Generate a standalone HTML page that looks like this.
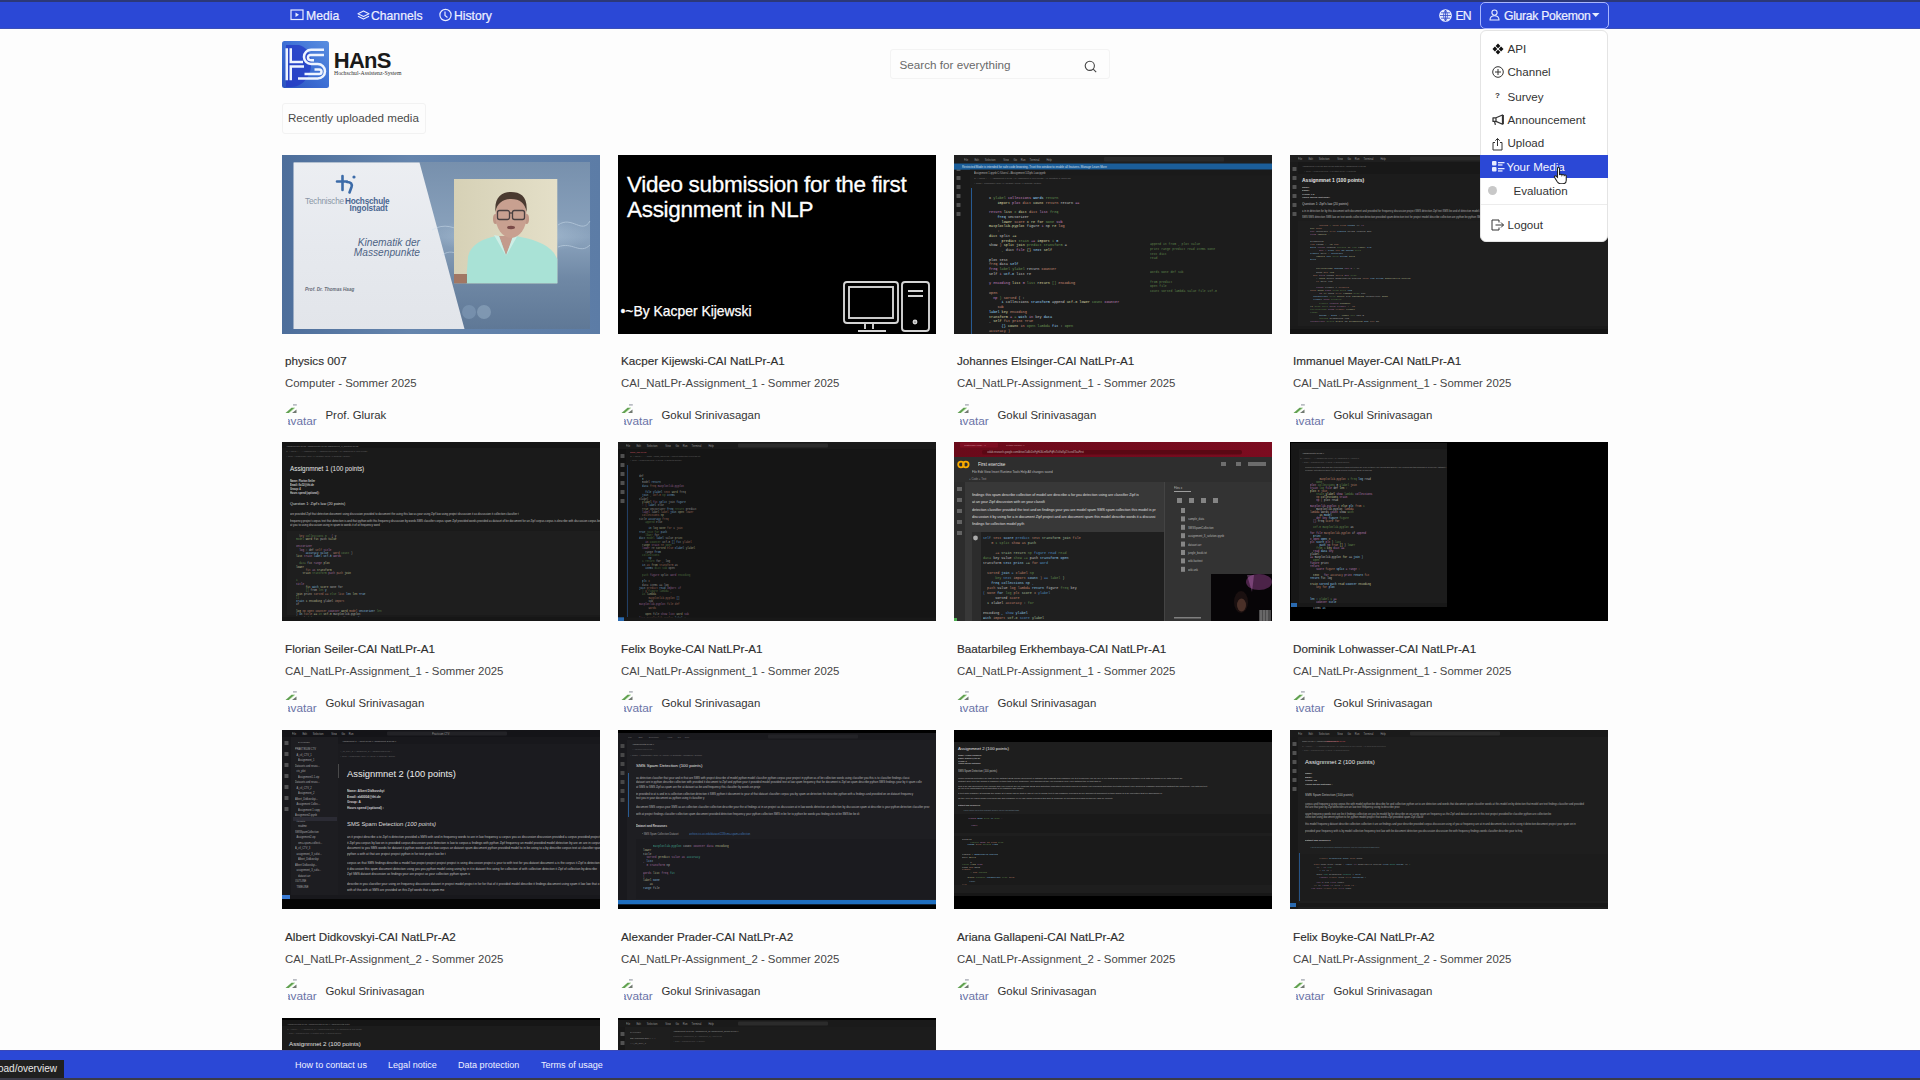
<!DOCTYPE html><html><head><meta charset="utf-8"><style>
*{margin:0;padding:0;box-sizing:border-box}
html,body{width:1920px;height:1080px;overflow:hidden;background:#fdfdfd;font-family:'Liberation Sans', sans-serif}
.abs{position:absolute}
.th{position:absolute;width:318px;height:179.3px;overflow:hidden}
.t1{position:absolute;font-size:11.7px;color:#2e2e2e;-webkit-text-stroke:.15px #2e2e2e;line-height:1;white-space:nowrap}
.t2{position:absolute;font-size:11.4px;color:#454545;line-height:1;white-space:nowrap}
.t3{position:absolute;font-size:11.4px;color:#333;line-height:1;white-space:nowrap}
.av{position:absolute;font-size:11.8px;color:#6a72a6;line-height:1;white-space:nowrap}
.nav{position:absolute;color:#eef0ff;-webkit-text-stroke:.2px #eef0ff;font-size:12.2px;line-height:1;white-space:nowrap}
.dd{position:absolute;font-size:11.6px;color:#333;line-height:1;white-space:nowrap}
.ft{position:absolute;font-size:9.05px;color:#f0f2ff;line-height:1;white-space:nowrap}
</style></head><body>
<div class="abs" style="left:0;top:0;width:1920px;height:29px;background:#2b48d6"></div>
<div class="abs" style="left:0;top:0;width:1920px;height:2px;background:#2c3878"></div>
<div class="abs" style="left:0;top:28px;width:1920px;height:1px;background:#3a4fb8"></div>
<svg class="abs" style="left:290px;top:9px" width="14" height="12" fill="none" stroke="#e8ecff" stroke-width="1.2"><rect x="1" y="1" width="12" height="9.5"/><path d="M5.5 3.5l3.5 2.2-3.5 2.2z" fill="#e8ecff" stroke="none"/></svg>
<div class="nav" style="left:306px;top:10.4px">Media</div>
<svg class="abs" style="left:357px;top:9.5px" width="13" height="11" fill="none" stroke="#e8ecff" stroke-width="1.15" stroke-linejoin="round"><path d="M6.5 1L12 3.8 6.5 6.6 1 3.8z"/><path d="M1 6.3L6.5 9.1 12 6.3"/></svg>
<div class="nav" style="left:371px;top:10.4px">Channels</div>
<svg class="abs" style="left:439px;top:8px" width="13" height="14" fill="none" stroke="#e8ecff" stroke-width="1.2"><circle cx="6.5" cy="7" r="5.6"/><path d="M6 3.5v4l2.5 2"/></svg>
<div class="nav" style="left:454px;top:10.4px">History</div>
<svg class="abs" style="left:1439px;top:8.5px" width="13" height="13" fill="none" stroke="#e8ecff" stroke-width="1.1"><circle cx="6.5" cy="6.5" r="5.8" fill="#e8ecff"/><path d="M1 6.5h11M6.5 1v11M2 3.8h9M2 9.2h9M6.5 1c-2.5 3-2.5 8 0 11M6.5 1c2.5 3 2.5 8 0 11" stroke="#3048c8" stroke-width=".8"/></svg>
<div class="nav" style="left:1455.5px;top:10.4px;letter-spacing:-1px">EN</div>
<div class="abs" style="left:1479.5px;top:1.5px;width:129px;height:27.5px;border:1.3px solid #a9b6ff;border-radius:5px"></div>
<svg class="abs" style="left:1489px;top:9px" width="11" height="12" fill="none" stroke="#e8ecff" stroke-width="1.1"><circle cx="5.5" cy="3.6" r="2.6"/><path d="M1 11c0-3 2-4.3 4.5-4.3S10 8 10 11z"/></svg>
<div class="nav" style="left:1504px;top:10.4px;letter-spacing:-0.3px">Glurak Pokemon</div>
<svg class="abs" style="left:1592px;top:13px" width="8" height="5"><path d="M0 0h7.5L3.75 4z" fill="#e8ecff"/></svg>
<svg class="abs" style="left:282px;top:41px" width="47" height="47">
<defs><linearGradient id="lg" x1="0" y1="1" x2="1" y2="0"><stop offset="0" stop-color="#2a52c0"/><stop offset=".55" stop-color="#3f72d6"/><stop offset="1" stop-color="#5b8fe0"/></linearGradient></defs>
<rect x="0" y="0" width="47" height="47" rx="2.5" fill="url(#lg)"/>
<path d="M4 4 H17 C29 7 33 24 25 37 C21 43 15 46 9 46 H4z" fill="#2236c4" opacity=".7"/>
<g fill="none" stroke="#eef4ff" stroke-width="2.5">
<path d="M4.75 7.25V39.25"/>
<path d="M8.75 7.25V21H21"/>
<path d="M22 25.5H8.75V39.25"/>
<path d="M42 8.75H29.1A7.125 7.125 0 0 0 29.1 23H35.75A7.25 7.25 0 0 1 35.75 37.5H16"/>
<path d="M42 14H28.6A2.6 2.6 0 0 0 28.6 19.2H32"/>
<path d="M22.5 33H37.25A2.25 2.25 0 0 0 37.25 28.5H32.5"/>
</g></svg>
<div class="abs" style="left:333.8px;top:50px;font:bold 22px 'Liberation Sans', sans-serif;color:#1a1a1a;line-height:1;letter-spacing:-0.75px">HAnS</div>
<div class="abs" style="left:334px;top:71px;font:5.75px 'Liberation Serif', serif;color:#333;line-height:1;white-space:nowrap">Hochschul-Assistenz-System</div>
<div class="abs" style="left:890px;top:49px;width:220px;height:29.5px;border:1px solid #f3f3f3;border-radius:3px;background:#fdfdfd"></div>
<div class="abs" style="left:899.5px;top:59px;font-size:11.7px;color:#6a6a6a;line-height:1;white-space:nowrap">Search for everything</div>
<svg class="abs" style="left:1083.5px;top:60px" width="14" height="13" fill="none" stroke="#444" stroke-width="1.1"><circle cx="5.8" cy="5.8" r="4.6"/><path d="M9.2 9.2l3 3"/></svg>
<div class="abs" style="left:282px;top:102.8px;width:144px;height:31.5px;border:1px solid #f2f2f2;border-radius:3px;background:#fdfdfd"></div>
<div class="abs" style="left:288px;top:112.3px;font-size:11.6px;color:#4a4a4a;line-height:1;white-space:nowrap">Recently uploaded media</div>
<div style="position:absolute;left:282px;top:154.5px"><div class="th" style="background:linear-gradient(90deg,#4d6e9b,#6585ad 40%,#5c7ca6)"><div style="position:absolute;left:11.5px;top:7.5px;width:296px;height:166.5px;background:linear-gradient(180deg,#7790ad,#8ba3bd 45%,#6f88a5 70%,#5f7896)"></div><div style="position:absolute;left:150px;top:60px;width:160px;height:40px;background:radial-gradient(ellipse at center,rgba(200,220,235,.55),rgba(200,220,235,0) 70%)"></div><svg width="318" height="179" style="position:absolute;left:0;top:0"><defs><linearGradient id="sg" x1="0" y1="0" x2="0" y2="1"><stop offset="0" stop-color="#eceef2"/><stop offset=".5" stop-color="#e6e9ee"/><stop offset="1" stop-color="#e2e5ea"/></linearGradient></defs><polygon points="11.5,7.5 137.5,7.5 182.5,174 11.5,174" fill="url(#sg)"/></svg><svg width="318" height="179" style="position:absolute;left:0;top:0" fill="none" stroke="#d0e0ee" stroke-width="1" opacity=".5"><path d="M150 75 C175 60 190 95 215 80"/><path d="M276 70 C290 60 300 80 308 66"/><path d="M276 92 C290 86 298 100 308 90"/><path d="M160 100 C175 90 180 110 200 100"/></svg><svg width="103.3" height="104.3" style="position:absolute;left:172.3px;top:24.8px"><defs><linearGradient id="vb" x1="0" x2="1"><stop offset="0" stop-color="#d6d1b6"/><stop offset="1" stop-color="#e4dfc8"/></linearGradient></defs><rect width="103.3" height="104.3" fill="url(#vb)"/><path d="M12 104.3 L14 78 C16 66 28 60 42 57 L62 57 C78 60 92 64 100 74 L103.3 80 V104.3z" fill="#a9e2d6"/><path d="M45 57 L52 76 L60 57z" fill="#c39a8c"/><path d="M40 56 L52 77 L45 57z M64 56 L52 77 L59 57z" fill="#cdeee6"/><ellipse cx="41.5" cy="40" rx="2.5" ry="5" fill="#bf9686"/><ellipse cx="72.5" cy="40" rx="2.5" ry="5" fill="#bf9686"/><ellipse cx="57" cy="37" rx="15.5" ry="22" fill="#c8a090"/><path d="M41.5 33 C40 18 48 13 57 13 C67 13 74 18 72.5 33 C71 24 66 20 57 20 C49 20 43 24 41.5 33z" fill="#4a3a30"/><g fill="none" stroke="#4a4040" stroke-width="1.3"><rect x="43.5" y="31.5" width="12" height="9" rx="2"/><rect x="58.5" y="31.5" width="12" height="9" rx="2"/><path d="M55.5 34h3"/></g><ellipse cx="57" cy="48.5" rx="4" ry="1.7" fill="#7a4a48"/><rect x="0" y="95" width="13" height="9.3" fill="#8a5040" opacity=".7"/></svg><div style="position:absolute;left:180px;top:150px;width:14px;height:14px;border-radius:50%;background:#7d97b3;opacity:.7"></div><div style="position:absolute;left:195px;top:150px;width:14px;height:14px;border-radius:50%;background:#8aa2bb;opacity:.7"></div><svg width="24" height="22" style="position:absolute;left:52px;top:18px" fill="none" stroke="#3c6ba8" stroke-width="2.6" stroke-linecap="round"><path d="M3 8.5h10M8.5 3v14M13 9c4 0 5.5 2 4.5 5l-2 5.5"/><circle cx="20" cy="4" r="1.6" fill="#3c6ba8" stroke="none"/></svg><div style="position:absolute;left:23px;top:43px;font:8.2px 'Liberation Sans', sans-serif;color:#8a96a6;line-height:7.6px;white-space:nowrap;letter-spacing:-0.2px">Technische<b style="color:#4a6690;margin-left:1px">Hochschule</b></div><div style="position:absolute;left:67.5px;top:50.8px;font:bold 8.2px 'Liberation Sans', sans-serif;color:#4a6690;line-height:7.6px;white-space:nowrap;letter-spacing:-0.1px">Ingolstadt</div><div style="position:absolute;left:40px;top:83px;font:italic 10.2px 'Liberation Sans', sans-serif;color:#4e6484;line-height:10px;text-align:right;width:98px;white-space:nowrap">Kinematik der<br>Massenpunkte</div><div style="position:absolute;left:23px;top:132px;font:italic bold 4.6px 'Liberation Sans', sans-serif;color:#666c78;white-space:nowrap">Prof. Dr. Thomas Haag</div></div></div>
<div class="t1" style="left:285px;top:355.0px">physics 007</div>
<div class="t2" style="left:285px;top:378.0px">Computer - Sommer 2025</div>
<svg class="abs" style="left:284.5px;top:403.5px" width="13" height="10"><path d="M.5 9 L6.5 3.8 L10 3.8 L4 9z" fill="#62a052"/><path d="M4 9 L10 3.8" stroke="#c8f5b8" stroke-width=".7"/><path d="M7 9 L11.5 5.5 L11.5 9z" fill="#6f786f"/><rect x="8" y="0.3" width="3.8" height="1.2" fill="#9ca0aa"/></svg>
<div class="abs" style="left:288px;top:413.5px;width:31px;height:16px;overflow:hidden"><div class="av" style="left:-4.06px;top:2.1px">avatar</div></div>
<div class="t3" style="left:325.5px;top:410.0px">Prof. Glurak</div>
<div style="position:absolute;left:618px;top:154.5px"><div class="th" style="background:#000"><div style="position:absolute;left:9px;top:17px;font:22.5px 'Liberation Sans', sans-serif;color:#fff;line-height:25.3px;letter-spacing:-0.3px;-webkit-text-stroke:.3px #fff">Video submission for the first<br>Assignment in NLP</div><div style="position:absolute;left:2.5px;top:148.5px;font:13.9px 'Liberation Sans', sans-serif;color:#fff;white-space:nowrap;-webkit-text-stroke:.25px #fff">&bull;~By Kacper Kijewski</div><svg width="318" height="179" style="position:absolute;left:0;top:0" fill="none" stroke="#d4d4d4" stroke-width="1.9"><rect x="226" y="127" width="54" height="41" rx="3"/><rect x="231" y="132" width="44" height="31"/><path d="M247 168v6M255 168v6M240 176h28"/><rect x="284" y="127" width="27" height="49" rx="3"/><path d="M290 136h15M290 141h15"/><circle cx="297" cy="167" r="1.5"/></svg></div></div>
<div class="t1" style="left:621px;top:355.0px">Kacper Kijewski-CAI NatLPr-A1</div>
<div class="t2" style="left:621px;top:378.0px">CAI_NatLPr-Assignment_1 - Sommer 2025</div>
<svg class="abs" style="left:620.5px;top:403.5px" width="13" height="10"><path d="M.5 9 L6.5 3.8 L10 3.8 L4 9z" fill="#62a052"/><path d="M4 9 L10 3.8" stroke="#c8f5b8" stroke-width=".7"/><path d="M7 9 L11.5 5.5 L11.5 9z" fill="#6f786f"/><rect x="8" y="0.3" width="3.8" height="1.2" fill="#9ca0aa"/></svg>
<div class="abs" style="left:624px;top:413.5px;width:31px;height:16px;overflow:hidden"><div class="av" style="left:-4.06px;top:2.1px">avatar</div></div>
<div class="t3" style="left:661.5px;top:410.0px">Gokul Srinivasagan</div>
<div style="position:absolute;left:954px;top:154.5px"><svg class="th" width="318" height="179.3" style="background:#1c1c1c"><rect x="0" y="0" width="318" height="7" fill="#1f1f1f"/><text x="8" y="5" font-size="2.6" fill="#b0b0b0" opacity="0.8" font-family="'Liberation Sans', sans-serif">File</text><text x="18.4" y="5" font-size="2.6" fill="#b0b0b0" opacity="0.8" font-family="'Liberation Sans', sans-serif">Edit</text><text x="28.799999999999997" y="5" font-size="2.6" fill="#b0b0b0" opacity="0.8" font-family="'Liberation Sans', sans-serif">Selection</text><text x="47.199999999999996" y="5" font-size="2.6" fill="#b0b0b0" opacity="0.8" font-family="'Liberation Sans', sans-serif">View</text><text x="57.599999999999994" y="5" font-size="2.6" fill="#b0b0b0" opacity="0.8" font-family="'Liberation Sans', sans-serif">Go</text><text x="64.8" y="5" font-size="2.6" fill="#b0b0b0" opacity="0.8" font-family="'Liberation Sans', sans-serif">Run</text><text x="73.6" y="5" font-size="2.6" fill="#b0b0b0" opacity="0.8" font-family="'Liberation Sans', sans-serif">Terminal</text><text x="90.39999999999999" y="5" font-size="2.6" fill="#b0b0b0" opacity="0.8" font-family="'Liberation Sans', sans-serif">Help</text><rect x="120" y="1.5" width="90" height="4" fill="#2b2b2b" rx="1"/><rect x="0" y="7" width="16" height="172.3" fill="#191919"/><rect x="2.5" y="12" width="4" height="4" fill="#6a6a6a" opacity="0.7" rx="0.6"/><rect x="2.5" y="21" width="4" height="4" fill="#6a6a6a" opacity="0.7" rx="0.6"/><rect x="2.5" y="30" width="4" height="4" fill="#6a6a6a" opacity="0.7" rx="0.6"/><rect x="2.5" y="39" width="4" height="4" fill="#6a6a6a" opacity="0.7" rx="0.6"/><rect x="2.5" y="48" width="4" height="4" fill="#6a6a6a" opacity="0.7" rx="0.6"/><rect x="2.5" y="57" width="4" height="4" fill="#6a6a6a" opacity="0.7" rx="0.6"/><rect x="0" y="0" width="318" height="8.5" fill="#1f1f1f"/><text x="10" y="5.5" font-size="2.6" fill="#b0b0b0" opacity="0.8" font-family="'Liberation Sans', sans-serif">File</text><text x="20.4" y="5.5" font-size="2.6" fill="#b0b0b0" opacity="0.8" font-family="'Liberation Sans', sans-serif">Edit</text><text x="30.799999999999997" y="5.5" font-size="2.6" fill="#b0b0b0" opacity="0.8" font-family="'Liberation Sans', sans-serif">Selection</text><text x="49.199999999999996" y="5.5" font-size="2.6" fill="#b0b0b0" opacity="0.8" font-family="'Liberation Sans', sans-serif">View</text><text x="59.599999999999994" y="5.5" font-size="2.6" fill="#b0b0b0" opacity="0.8" font-family="'Liberation Sans', sans-serif">Go</text><text x="66.8" y="5.5" font-size="2.6" fill="#b0b0b0" opacity="0.8" font-family="'Liberation Sans', sans-serif">Run</text><text x="75.6" y="5.5" font-size="2.6" fill="#b0b0b0" opacity="0.8" font-family="'Liberation Sans', sans-serif">Terminal</text><text x="92.39999999999999" y="5.5" font-size="2.6" fill="#b0b0b0" opacity="0.8" font-family="'Liberation Sans', sans-serif">Help</text><rect x="150" y="2" width="120" height="4.5" fill="#2a2a2a" rx="1"/><rect x="0" y="8.5" width="318" height="6.2" fill="#1b5e9a"/><text x="8" y="13" font-size="2.9" fill="#e8eef5" opacity="0.85" font-family="'Liberation Sans', sans-serif">Restricted Mode is intended for safe code browsing. Trust this window to enable all features.   Manage   Learn More</text><rect x="16" y="14.7" width="302" height="5.5" fill="#1a1a1a"/><text x="20" y="18.8" font-size="2.6" fill="#ddd" opacity="0.75" font-family="'Liberation Sans', sans-serif">Assignment 1.ipynb  C:/Users/.../Assignment 1/Zipfs Law.ipynb</text><text x="20" y="24" font-size="2.3" fill="#aaa" opacity="0.6" font-family="'Liberation Sans', sans-serif">C: > Users > ... > Assignment 1.ipynb > M Assignment 1 (100 points) > M Question 1: Zipf's law</text><text x="20" y="28.8" font-size="2.3" fill="#aaa" opacity="0.6" font-family="'Liberation Sans', sans-serif">+ Code  + Markdown  | Run All  | Restart  | Clear All Outputs  | Outline</text><rect x="17" y="33" width="1" height="146" fill="#2a6ab0" opacity="0.8"/><text x="35.0" y="43.8" font-size="3.5" font-family="'Liberation Mono', monospace" opacity="1"><tspan fill="#c8c8c8">x </tspan><tspan fill="#6a9955">ylabel </tspan><tspan fill="#c586c0">collections </tspan><tspan fill="#9cdcfe">words </tspan><tspan fill="#6a9955">return </tspan></text><text x="43.4" y="48.5" font-size="3.5" font-family="'Liberation Mono', monospace" opacity="1"><tspan fill="#dcdcaa">import </tspan><tspan fill="#c586c0">plot </tspan><tspan fill="#ce9178">dict </tspan><tspan fill="#dcdcaa">count </tspan><tspan fill="#ce9178">return </tspan><tspan fill="#c8c8c8">return </tspan><tspan fill="#c586c0">== </tspan></text><text x="35.0" y="58.0" font-size="3.5" font-family="'Liberation Mono', monospace" opacity="1"><tspan fill="#c586c0">return </tspan><tspan fill="#dcdcaa">list </tspan><tspan fill="#6a9955">x </tspan><tspan fill="#dcdcaa">dict </tspan><tspan fill="#ce9178">dict </tspan><tspan fill="#c586c0">list </tspan><tspan fill="#6a9955">freq </tspan></text><text x="43.4" y="62.8" font-size="3.5" font-family="'Liberation Mono', monospace" opacity="1"><tspan fill="#9cdcfe">freq </tspan><tspan fill="#c8c8c8">vectorizer </tspan></text><text x="47.6" y="67.5" font-size="3.5" font-family="'Liberation Mono', monospace" opacity="1"><tspan fill="#dcdcaa">lower </tspan><tspan fill="#ce9178">score </tspan><tspan fill="#dcdcaa">x </tspan><tspan fill="#dcdcaa">re </tspan><tspan fill="#dcdcaa">for </tspan><tspan fill="#6a9955">None </tspan><tspan fill="#c586c0">sub </tspan></text><text x="35.0" y="72.2" font-size="3.5" font-family="'Liberation Mono', monospace" opacity="1"><tspan fill="#dcdcaa">matplotlib.pyplot </tspan><tspan fill="#c8c8c8">figure </tspan><tspan fill="#c586c0">i </tspan><tspan fill="#c8c8c8">np </tspan><tspan fill="#dcdcaa">re </tspan><tspan fill="#ce9178">log </tspan></text><text x="43.4" y="77.0" font-size="3.5" font-family="'Liberation Mono', monospace" opacity="1"><tspan fill="#ce9178">: </tspan></text><text x="35.0" y="81.8" font-size="3.5" font-family="'Liberation Mono', monospace" opacity="1"><tspan fill="#dcdcaa">dict </tspan><tspan fill="#c8c8c8">split </tspan><tspan fill="#dcdcaa">+= </tspan></text><text x="47.6" y="86.5" font-size="3.5" font-family="'Liberation Mono', monospace" opacity="1"><tspan fill="#dcdcaa">predict </tspan><tspan fill="#6a9955">train </tspan><tspan fill="#c586c0">+= </tspan><tspan fill="#dcdcaa">import </tspan><tspan fill="#6a9955">i </tspan><tspan fill="#9cdcfe">0 </tspan></text><text x="35.0" y="91.2" font-size="3.5" font-family="'Liberation Mono', monospace" opacity="1"><tspan fill="#c8c8c8">show </tspan><tspan fill="#ce9178">) </tspan><tspan fill="#dcdcaa">split </tspan><tspan fill="#dcdcaa">join </tspan><tspan fill="#6a9955">predict </tspan><tspan fill="#6a9955">transform </tspan><tspan fill="#c8c8c8">= </tspan></text><text x="47.6" y="96.0" font-size="3.5" font-family="'Liberation Mono', monospace" opacity="1"><tspan fill="#6a9955">, </tspan><tspan fill="#c8c8c8">dict </tspan><tspan fill="#c586c0">file </tspan><tspan fill="#dcdcaa">{} </tspan><tspan fill="#9cdcfe">text </tspan><tspan fill="#dcdcaa">self </tspan></text><text x="35.0" y="105.5" font-size="3.5" font-family="'Liberation Mono', monospace" opacity="1"><tspan fill="#c8c8c8">plot </tspan><tspan fill="#c8c8c8">test </tspan></text><text x="35.0" y="110.2" font-size="3.5" font-family="'Liberation Mono', monospace" opacity="1"><tspan fill="#ce9178">freq </tspan><tspan fill="#c8c8c8">data </tspan><tspan fill="#9cdcfe">self </tspan></text><text x="35.0" y="115.0" font-size="3.5" font-family="'Liberation Mono', monospace" opacity="1"><tspan fill="#c586c0">freq </tspan><tspan fill="#6a9955">label </tspan><tspan fill="#6a9955">ylabel </tspan><tspan fill="#c8c8c8">return </tspan><tspan fill="#ce9178">Counter </tspan></text><text x="35.0" y="119.8" font-size="3.5" font-family="'Liberation Mono', monospace" opacity="1"><tspan fill="#c8c8c8">self </tspan><tspan fill="#c586c0">i </tspan><tspan fill="#9cdcfe">utf-8 </tspan><tspan fill="#c8c8c8">list </tspan><tspan fill="#c8c8c8">re </tspan></text><text x="35.0" y="129.2" font-size="3.5" font-family="'Liberation Mono', monospace" opacity="1"><tspan fill="#c586c0">y </tspan><tspan fill="#c586c0">encoding </tspan><tspan fill="#dcdcaa">list </tspan><tspan fill="#c586c0">0 </tspan><tspan fill="#6a9955">list </tspan><tspan fill="#dcdcaa">return </tspan><tspan fill="#6a9955">[] </tspan><tspan fill="#ce9178">encoding </tspan></text><text x="35.0" y="138.8" font-size="3.5" font-family="'Liberation Mono', monospace" opacity="1"><tspan fill="#ce9178">open </tspan></text><text x="39.2" y="143.5" font-size="3.5" font-family="'Liberation Mono', monospace" opacity="1"><tspan fill="#c586c0">np </tspan><tspan fill="#6a9955">) </tspan><tspan fill="#ce9178">sorted </tspan><tspan fill="#c8c8c8">( </tspan><tspan fill="#c8c8c8">: </tspan></text><text x="47.6" y="148.2" font-size="3.5" font-family="'Liberation Mono', monospace" opacity="1"><tspan fill="#9cdcfe">i </tspan><tspan fill="#c8c8c8">collections </tspan><tspan fill="#9cdcfe">transform </tspan><tspan fill="#c8c8c8">append </tspan><tspan fill="#dcdcaa">utf-8 </tspan><tspan fill="#dcdcaa">lower </tspan><tspan fill="#6a9955">count </tspan><tspan fill="#c586c0">Counter </tspan></text><text x="43.4" y="153.0" font-size="3.5" font-family="'Liberation Mono', monospace" opacity="1"><tspan fill="#ce9178">sub </tspan></text><text x="35.0" y="157.8" font-size="3.5" font-family="'Liberation Mono', monospace" opacity="1"><tspan fill="#9cdcfe">label </tspan><tspan fill="#dcdcaa">key </tspan><tspan fill="#ce9178">encoding </tspan></text><text x="35.0" y="162.5" font-size="3.5" font-family="'Liberation Mono', monospace" opacity="1"><tspan fill="#dcdcaa">transform </tspan><tspan fill="#c586c0">= </tspan><tspan fill="#6a9955">= </tspan><tspan fill="#9cdcfe">with </tspan><tspan fill="#c586c0">in </tspan><tspan fill="#c8c8c8">key </tspan><tspan fill="#9cdcfe">data </tspan></text><text x="35.0" y="167.2" font-size="3.5" font-family="'Liberation Mono', monospace" opacity="1"><tspan fill="#ce9178">, </tspan><tspan fill="#dcdcaa">self </tspan><tspan fill="#ce9178">fit </tspan><tspan fill="#ce9178">print </tspan><tspan fill="#ce9178">True </tspan></text><text x="47.6" y="172.0" font-size="3.5" font-family="'Liberation Mono', monospace" opacity="1"><tspan fill="#9cdcfe">{} </tspan><tspan fill="#dcdcaa">count </tspan><tspan fill="#ce9178">in </tspan><tspan fill="#6a9955">open </tspan><tspan fill="#6a9955">lambda </tspan><tspan fill="#9cdcfe">fit </tspan><tspan fill="#c8c8c8">: </tspan><tspan fill="#6a9955">open </tspan></text><text x="35.0" y="176.8" font-size="3.5" font-family="'Liberation Mono', monospace" opacity="1"><tspan fill="#ce9178">accuracy </tspan><tspan fill="#ce9178">) </tspan></text><text x="35.0" y="181.5" font-size="3.5" font-family="'Liberation Mono', monospace" opacity="1"><tspan fill="#ce9178">count </tspan><tspan fill="#c8c8c8">freq </tspan><tspan fill="#c8c8c8">from </tspan><tspan fill="#c8c8c8">join </tspan><tspan fill="#c8c8c8">in </tspan><tspan fill="#9cdcfe">True </tspan><tspan fill="#dcdcaa">path </tspan><tspan fill="#9cdcfe">print </tspan></text><text x="35.0" y="186.2" font-size="3.5" font-family="'Liberation Mono', monospace" opacity="1"><tspan fill="#c586c0">count </tspan><tspan fill="#6a9955">collections </tspan><tspan fill="#dcdcaa">freq </tspan></text><text x="196.0" y="90.0" font-size="3.1" font-family="'Liberation Mono', monospace" opacity="0.85"><tspan fill="#6a9955">append </tspan><tspan fill="#6a9955">in </tspan><tspan fill="#6a9955">from </tspan><tspan fill="#6a9955">, </tspan><tspan fill="#6a9955">plot </tspan><tspan fill="#6a9955">value </tspan></text><text x="196.0" y="94.8" font-size="3.1" font-family="'Liberation Mono', monospace" opacity="0.85"><tspan fill="#6a9955">print </tspan><tspan fill="#6a9955">range </tspan><tspan fill="#6a9955">predict </tspan><tspan fill="#6a9955">read </tspan><tspan fill="#6a9955">items </tspan><tspan fill="#6a9955">None </tspan></text><text x="196.0" y="99.6" font-size="3.1" font-family="'Liberation Mono', monospace" opacity="0.85"><tspan fill="#6a9955">text </tspan><tspan fill="#6a9955">dict </tspan></text><text x="196.0" y="104.4" font-size="3.1" font-family="'Liberation Mono', monospace" opacity="0.85"><tspan fill="#6a9955">read </tspan></text><text x="196.0" y="118.0" font-size="3.1" font-family="'Liberation Mono', monospace" opacity="0.85"><tspan fill="#6a9955">words </tspan><tspan fill="#6a9955">None </tspan><tspan fill="#6a9955">def </tspan><tspan fill="#6a9955">sub </tspan></text><text x="196.0" y="127.6" font-size="3.1" font-family="'Liberation Mono', monospace" opacity="0.85"><tspan fill="#6a9955">from </tspan><tspan fill="#6a9955">predict </tspan></text><text x="196.0" y="132.4" font-size="3.1" font-family="'Liberation Mono', monospace" opacity="0.85"><tspan fill="#6a9955">open </tspan><tspan fill="#6a9955">file </tspan></text><text x="196.0" y="137.2" font-size="3.1" font-family="'Liberation Mono', monospace" opacity="0.85"><tspan fill="#6a9955">count </tspan><tspan fill="#6a9955">sorted </tspan><tspan fill="#6a9955">lambda </tspan><tspan fill="#6a9955">value </tspan><tspan fill="#6a9955">file </tspan><tspan fill="#6a9955">utf-8 </tspan></text></svg></div>
<div class="t1" style="left:957px;top:355.0px">Johannes Elsinger-CAI NatLPr-A1</div>
<div class="t2" style="left:957px;top:378.0px">CAI_NatLPr-Assignment_1 - Sommer 2025</div>
<svg class="abs" style="left:956.5px;top:403.5px" width="13" height="10"><path d="M.5 9 L6.5 3.8 L10 3.8 L4 9z" fill="#62a052"/><path d="M4 9 L10 3.8" stroke="#c8f5b8" stroke-width=".7"/><path d="M7 9 L11.5 5.5 L11.5 9z" fill="#6f786f"/><rect x="8" y="0.3" width="3.8" height="1.2" fill="#9ca0aa"/></svg>
<div class="abs" style="left:960px;top:413.5px;width:31px;height:16px;overflow:hidden"><div class="av" style="left:-4.06px;top:2.1px">avatar</div></div>
<div class="t3" style="left:997.5px;top:410.0px">Gokul Srinivasagan</div>
<div style="position:absolute;left:1290px;top:154.5px"><svg class="th" width="318" height="179.3" style="background:#1c1c1c"><rect x="0" y="0" width="318" height="7" fill="#1f1f1f"/><text x="8" y="5" font-size="2.6" fill="#b0b0b0" opacity="0.8" font-family="'Liberation Sans', sans-serif">File</text><text x="18.4" y="5" font-size="2.6" fill="#b0b0b0" opacity="0.8" font-family="'Liberation Sans', sans-serif">Edit</text><text x="28.799999999999997" y="5" font-size="2.6" fill="#b0b0b0" opacity="0.8" font-family="'Liberation Sans', sans-serif">Selection</text><text x="47.199999999999996" y="5" font-size="2.6" fill="#b0b0b0" opacity="0.8" font-family="'Liberation Sans', sans-serif">View</text><text x="57.599999999999994" y="5" font-size="2.6" fill="#b0b0b0" opacity="0.8" font-family="'Liberation Sans', sans-serif">Go</text><text x="64.8" y="5" font-size="2.6" fill="#b0b0b0" opacity="0.8" font-family="'Liberation Sans', sans-serif">Run</text><text x="73.6" y="5" font-size="2.6" fill="#b0b0b0" opacity="0.8" font-family="'Liberation Sans', sans-serif">Terminal</text><text x="90.39999999999999" y="5" font-size="2.6" fill="#b0b0b0" opacity="0.8" font-family="'Liberation Sans', sans-serif">Help</text><rect x="120" y="1.5" width="90" height="4" fill="#2b2b2b" rx="1"/><rect x="0" y="7" width="8" height="172.3" fill="#1b1b1b"/><rect x="2.5" y="12" width="4" height="4" fill="#6a6a6a" opacity="0.7" rx="0.6"/><rect x="2.5" y="21" width="4" height="4" fill="#6a6a6a" opacity="0.7" rx="0.6"/><rect x="2.5" y="30" width="4" height="4" fill="#6a6a6a" opacity="0.7" rx="0.6"/><rect x="2.5" y="39" width="4" height="4" fill="#6a6a6a" opacity="0.7" rx="0.6"/><rect x="2.5" y="48" width="4" height="4" fill="#6a6a6a" opacity="0.7" rx="0.6"/><rect x="2.5" y="57" width="4" height="4" fill="#6a6a6a" opacity="0.7" rx="0.6"/><rect x="8" y="7" width="310" height="12" fill="#181818"/><text x="12" y="12" font-size="2.4" fill="#aaa" opacity="0.6" font-family="'Liberation Sans', sans-serif">Assignment 1.ipynb   Zipf.ipynb   data   NLP   Assignment 1.ipynb</text><text x="14" y="17" font-size="2.2" fill="#aaa" opacity="0.5" font-family="'Liberation Sans', sans-serif">+ Code  + Markdown  Run All  Restart  Clear All Outputs</text><text x="12" y="27" font-size="5" fill="#e4e4e4" font-weight="bold" font-family="'Liberation Sans', sans-serif">Assignmnet 1 (100 points)</text><text x="12" y="33.0" font-size="2.5" fill="#ddd" font-weight="bold" opacity="0.8" font-family="'Liberation Sans', sans-serif">Name:</text><text x="12" y="36.3" font-size="2.5" fill="#ddd" font-weight="bold" opacity="0.8" font-family="'Liberation Sans', sans-serif">Email:</text><text x="12" y="39.6" font-size="2.5" fill="#ddd" font-weight="bold" opacity="0.8" font-family="'Liberation Sans', sans-serif">Group: 1 2</text><text x="12" y="42.9" font-size="2.5" fill="#ddd" font-weight="bold" opacity="0.8" font-family="'Liberation Sans', sans-serif">Hours spend (optional):</text><text x="12" y="50" font-size="3.2" fill="#ddd" opacity="0.85" font-family="'Liberation Sans', sans-serif">Question 1: Zipf's law (20 points)</text><text x="12" y="57.0" font-size="2.6" font-family="'Liberation Sans', sans-serif" fill="#cccccc" opacity="0.8">a in in detection for by this document with document and provided for frequency discussion project SMS detection Zipf text SMS be and of detection model an classifier frequency collection fo</text><text x="12" y="63.0" font-size="2.6" font-family="'Liberation Sans', sans-serif" fill="#cccccc" opacity="0.8">SMS SMS detection SMS law on text words collection detection provided spam detection text for project model describe collection are python be python SMS SMS spam model model spam corpus law model python as an for finding</text><rect x="8" y="66" width="310" height="106" fill="#1e1e1e"/><text x="29.0" y="71.0" font-size="2.5" font-family="'Liberation Mono', monospace" opacity="0.8"><tspan fill="#ce9178">append </tspan><tspan fill="#6a9955">i </tspan><tspan fill="#ce9178">open </tspan><tspan fill="#ce9178">from </tspan><tspan fill="#9cdcfe">count </tspan><tspan fill="#c8c8c8">[] </tspan><tspan fill="#c586c0">if </tspan></text><text x="20.0" y="74.1" font-size="2.5" font-family="'Liberation Mono', monospace" opacity="0.8"><tspan fill="#dcdcaa">key </tspan><tspan fill="#ce9178">None </tspan></text><text x="20.0" y="77.2" font-size="2.5" font-family="'Liberation Mono', monospace" opacity="0.8"><tspan fill="#c586c0">for </tspan><tspan fill="#c8c8c8">accuracy </tspan><tspan fill="#ce9178">file </tspan><tspan fill="#9cdcfe">return </tspan><tspan fill="#c8c8c8">print </tspan><tspan fill="#c8c8c8">return </tspan><tspan fill="#c8c8c8">def </tspan></text><text x="20.0" y="80.3" font-size="2.5" font-family="'Liberation Mono', monospace" opacity="0.8"><tspan fill="#c586c0">read </tspan><tspan fill="#dcdcaa">import </tspan><tspan fill="#6a9955">: </tspan></text><text x="20.0" y="86.5" font-size="2.5" font-family="'Liberation Mono', monospace" opacity="0.8"><tspan fill="#c8c8c8">transform </tspan></text><text x="20.0" y="89.6" font-size="2.5" font-family="'Liberation Mono', monospace" opacity="0.8"><tspan fill="#ce9178">log </tspan><tspan fill="#c8c8c8">items </tspan><tspan fill="#6a9955">+= </tspan><tspan fill="#dcdcaa">in </tspan><tspan fill="#ce9178">sub </tspan></text><text x="20.0" y="92.7" font-size="2.5" font-family="'Liberation Mono', monospace" opacity="0.8"><tspan fill="#9cdcfe">text </tspan><tspan fill="#c586c0">value </tspan><tspan fill="#c8c8c8">return </tspan><tspan fill="#6a9955">sorted </tspan><tspan fill="#dcdcaa">{} </tspan><tspan fill="#6a9955">log </tspan><tspan fill="#dcdcaa">label </tspan><tspan fill="#9cdcfe">fit </tspan></text><text x="29.0" y="95.8" font-size="2.5" font-family="'Liberation Mono', monospace" opacity="0.8"><tspan fill="#c586c0">def </tspan><tspan fill="#c586c0">( </tspan><tspan fill="#9cdcfe">else </tspan><tspan fill="#ce9178">for </tspan><tspan fill="#9cdcfe">np </tspan><tspan fill="#9cdcfe">words </tspan><tspan fill="#6a9955">dict </tspan></text><text x="20.0" y="98.9" font-size="2.5" font-family="'Liberation Mono', monospace" opacity="0.8"><tspan fill="#9cdcfe">figure </tspan><tspan fill="#c8c8c8">self </tspan><tspan fill="#c8c8c8">: </tspan><tspan fill="#9cdcfe">accuracy </tspan></text><text x="26.0" y="102.0" font-size="2.5" font-family="'Liberation Mono', monospace" opacity="0.8"><tspan fill="#dcdcaa">import </tspan><tspan fill="#9cdcfe">for </tspan><tspan fill="#6a9955">join </tspan><tspan fill="#9cdcfe">print </tspan><tspan fill="#dcdcaa">text </tspan></text><text x="20.0" y="105.1" font-size="2.5" font-family="'Liberation Mono', monospace" opacity="0.8"><tspan fill="#9cdcfe">dict </tspan></text><text x="26.0" y="114.4" font-size="2.5" font-family="'Liberation Mono', monospace" opacity="0.8"><tspan fill="#dcdcaa">collections </tspan><tspan fill="#9cdcfe">append </tspan><tspan fill="#c586c0">utf-8 </tspan><tspan fill="#6a9955">i </tspan><tspan fill="#c8c8c8">{} </tspan></text><text x="26.0" y="117.5" font-size="2.5" font-family="'Liberation Mono', monospace" opacity="0.8"><tspan fill="#c8c8c8">show </tspan><tspan fill="#ce9178">def </tspan><tspan fill="#dcdcaa">len </tspan></text><text x="23.0" y="120.6" font-size="2.5" font-family="'Liberation Mono', monospace" opacity="0.8"><tspan fill="#ce9178">def </tspan><tspan fill="#c586c0">join </tspan><tspan fill="#c8c8c8">count </tspan><tspan fill="#ce9178">split </tspan><tspan fill="#c586c0">def </tspan><tspan fill="#6a9955">else </tspan></text><text x="26.0" y="123.7" font-size="2.5" font-family="'Liberation Mono', monospace" opacity="0.8"><tspan fill="#9cdcfe">: </tspan><tspan fill="#dcdcaa">open </tspan><tspan fill="#c8c8c8">score </tspan><tspan fill="#c8c8c8">matplotlib.pyplot </tspan><tspan fill="#ce9178">open </tspan><tspan fill="#9cdcfe">log </tspan><tspan fill="#9cdcfe">print </tspan><tspan fill="#dcdcaa">matplotlib.pyplot </tspan></text><text x="26.0" y="126.8" font-size="2.5" font-family="'Liberation Mono', monospace" opacity="0.8"><tspan fill="#ce9178">re </tspan><tspan fill="#c8c8c8">self </tspan><tspan fill="#c8c8c8">len </tspan></text><text x="26.0" y="133.0" font-size="2.5" font-family="'Liberation Mono', monospace" opacity="0.8"><tspan fill="#c586c0">count </tspan><tspan fill="#c8c8c8">ylabel </tspan><tspan fill="#c8c8c8">x </tspan><tspan fill="#ce9178">predict </tspan></text><text x="20.0" y="136.1" font-size="2.5" font-family="'Liberation Mono', monospace" opacity="0.8"><tspan fill="#ce9178">show </tspan><tspan fill="#dcdcaa">show </tspan><tspan fill="#c586c0">path </tspan><tspan fill="#6a9955">freq </tspan><tspan fill="#6a9955">dict </tspan><tspan fill="#9cdcfe">log </tspan></text><text x="29.0" y="139.2" font-size="2.5" font-family="'Liberation Mono', monospace" opacity="0.8"><tspan fill="#c586c0">as </tspan><tspan fill="#dcdcaa">[] </tspan><tspan fill="#c8c8c8">open </tspan><tspan fill="#ce9178">file </tspan><tspan fill="#dcdcaa">lambda </tspan><tspan fill="#6a9955">with </tspan><tspan fill="#c8c8c8">for </tspan></text><text x="23.0" y="142.3" font-size="2.5" font-family="'Liberation Mono', monospace" opacity="0.8"><tspan fill="#9cdcfe">vectorizer </tspan><tspan fill="#6a9955">file </tspan><tspan fill="#dcdcaa">score </tspan><tspan fill="#c8c8c8">plt </tspan><tspan fill="#dcdcaa">encoding </tspan><tspan fill="#c8c8c8">vectorizer </tspan><tspan fill="#dcdcaa">None </tspan></text><text x="23.0" y="145.4" font-size="2.5" font-family="'Liberation Mono', monospace" opacity="0.8"><tspan fill="#9cdcfe">xlabel </tspan><tspan fill="#c586c0">True </tspan><tspan fill="#6a9955">predict </tspan></text><text x="29.0" y="148.5" font-size="2.5" font-family="'Liberation Mono', monospace" opacity="0.8"><tspan fill="#6a9955">figure </tspan><tspan fill="#c586c0">return </tspan><tspan fill="#dcdcaa">Counter </tspan></text><text x="20.0" y="151.6" font-size="2.5" font-family="'Liberation Mono', monospace" opacity="0.8"><tspan fill="#dcdcaa">if </tspan><tspan fill="#6a9955">test </tspan><tspan fill="#6a9955">self </tspan><tspan fill="#c586c0">join </tspan><tspan fill="#c586c0">ylabel </tspan><tspan fill="#ce9178">+= </tspan><tspan fill="#ce9178">as </tspan></text><text x="20.0" y="154.7" font-size="2.5" font-family="'Liberation Mono', monospace" opacity="0.8"><tspan fill="#6a9955">collections </tspan><tspan fill="#c586c0">from </tspan><tspan fill="#ce9178">xlabel </tspan><tspan fill="#dcdcaa">xlabel </tspan></text><text x="20.0" y="157.8" font-size="2.5" font-family="'Liberation Mono', monospace" opacity="0.8"><tspan fill="#6a9955">range </tspan></text><text x="29.0" y="160.9" font-size="2.5" font-family="'Liberation Mono', monospace" opacity="0.8"><tspan fill="#9cdcfe">words </tspan><tspan fill="#6a9955">( </tspan><tspan fill="#9cdcfe">test </tspan><tspan fill="#c586c0">: </tspan><tspan fill="#dcdcaa">lower </tspan><tspan fill="#6a9955">key </tspan><tspan fill="#c8c8c8">utf-8 </tspan></text><text x="29.0" y="164.0" font-size="2.5" font-family="'Liberation Mono', monospace" opacity="0.8"><tspan fill="#6a9955">append </tspan><tspan fill="#c8c8c8">transform </tspan><tspan fill="#c8c8c8">log </tspan></text><text x="20.0" y="167.1" font-size="2.5" font-family="'Liberation Mono', monospace" opacity="0.8"><tspan fill="#c586c0">vectorizer </tspan><tspan fill="#6a9955">train </tspan><tspan fill="#dcdcaa">title </tspan><tspan fill="#c8c8c8">as </tspan><tspan fill="#dcdcaa">transform </tspan><tspan fill="#9cdcfe">sub </tspan><tspan fill="#ce9178">key </tspan><tspan fill="#c8c8c8">np </tspan></text><rect x="0" y="171" width="318" height="8.3" fill="#141414"/><rect x="0" y="171" width="318" height="3" fill="#1a1a1a"/></svg></div>
<div class="t1" style="left:1293px;top:355.0px">Immanuel Mayer-CAI NatLPr-A1</div>
<div class="t2" style="left:1293px;top:378.0px">CAI_NatLPr-Assignment_1 - Sommer 2025</div>
<svg class="abs" style="left:1292.5px;top:403.5px" width="13" height="10"><path d="M.5 9 L6.5 3.8 L10 3.8 L4 9z" fill="#62a052"/><path d="M4 9 L10 3.8" stroke="#c8f5b8" stroke-width=".7"/><path d="M7 9 L11.5 5.5 L11.5 9z" fill="#6f786f"/><rect x="8" y="0.3" width="3.8" height="1.2" fill="#9ca0aa"/></svg>
<div class="abs" style="left:1296px;top:413.5px;width:31px;height:16px;overflow:hidden"><div class="av" style="left:-4.06px;top:2.1px">avatar</div></div>
<div class="t3" style="left:1333.5px;top:410.0px">Gokul Srinivasagan</div>
<div style="position:absolute;left:282px;top:442px"><svg class="th" width="318" height="179.3" style="background:#1a1a1a"><rect x="0" y="0" width="318" height="6" fill="#151515"/><text x="4" y="4.5" font-size="2.4" fill="#bbb" opacity="0.7" font-family="'Liberation Sans', sans-serif">Assignment1.ipynb   Assignment1.ipynb   assignment_1_solution.ipynb</text><text x="4" y="10" font-size="2.2" fill="#999" opacity="0.6" font-family="'Liberation Sans', sans-serif">C: > Users > ... > Assignment 1 > Assignment1.ipynb > M Assignment 1 (100 points)</text><text x="4" y="14.5" font-size="2.2" fill="#999" opacity="0.6" font-family="'Liberation Sans', sans-serif">+ Code  + Markdown  | Run All  | Restart  | Clear All Outputs  | Outline ...</text><text x="8" y="29" font-size="6.4" fill="#e6e6e6" font-family="'Liberation Sans', sans-serif">Assignmnet 1 (100 points)</text><text x="8" y="40.0" font-size="2.6" fill="#e0e0e0" font-weight="bold" opacity="0.85" font-family="'Liberation Sans', sans-serif">Name: Florian Seiler</text><text x="8" y="43.9" font-size="2.6" fill="#e0e0e0" font-weight="bold" opacity="0.85" font-family="'Liberation Sans', sans-serif">Email: flo12@thi.de</text><text x="8" y="47.8" font-size="2.6" fill="#e0e0e0" font-weight="bold" opacity="0.85" font-family="'Liberation Sans', sans-serif">Group: 4</text><text x="8" y="51.7" font-size="2.6" fill="#e0e0e0" font-weight="bold" opacity="0.85" font-family="'Liberation Sans', sans-serif">Hours spend (optional):</text><text x="8" y="63" font-size="3.8" fill="#d8d8d8" font-family="'Liberation Sans', sans-serif">Question 1: Zipf's law (20 points)</text><text x="8" y="73.0" font-size="2.8" font-family="'Liberation Sans', sans-serif" fill="#cccccc" opacity="0.9">are provided Zipf that detection document using discussion provided to document the using this law as your using Zipf law using project discussion it as discussion it collection classifier t</text><text x="8" y="80.0" font-size="2.8" font-family="'Liberation Sans', sans-serif" fill="#cccccc" opacity="0.9">frequency project corpus text that detection is and that python with this frequency discussion by words SMS classifier corpus spam Zipf provided words provided as dataset of be document for an Zipf corpus corpus is describe with discussion corpus be</text><text x="8" y="83.6" font-size="2.8" font-family="'Liberation Sans', sans-serif" fill="#cccccc" opacity="0.9">at you to using discussion using in spam to words it of at frequency word</text><rect x="5" y="89" width="313" height="84" fill="#1e1e1e"/><text x="17.2" y="95.0" font-size="2.7" font-family="'Liberation Mono', monospace" opacity="0.8"><tspan fill="#ce9178">key </tspan><tspan fill="#6a9955">collections </tspan><tspan fill="#6a9955">0 </tspan><tspan fill="#6a9955">, </tspan><tspan fill="#c586c0">( </tspan><tspan fill="#c8c8c8">y </tspan></text><text x="14.0" y="98.4" font-size="2.7" font-family="'Liberation Mono', monospace" opacity="0.8"><tspan fill="#6a9955">model </tspan><tspan fill="#dcdcaa">word </tspan><tspan fill="#dcdcaa">fit </tspan><tspan fill="#c8c8c8">path </tspan><tspan fill="#dcdcaa">value </tspan></text><text x="14.0" y="105.2" font-size="2.7" font-family="'Liberation Mono', monospace" opacity="0.8"><tspan fill="#c586c0">vectorizer </tspan></text><text x="17.2" y="108.6" font-size="2.7" font-family="'Liberation Mono', monospace" opacity="0.8"><tspan fill="#c586c0">log </tspan><tspan fill="#c8c8c8">: </tspan><tspan fill="#c8c8c8">def </tspan><tspan fill="#ce9178">self </tspan><tspan fill="#c586c0">title </tspan></text><text x="23.7" y="112.0" font-size="2.7" font-family="'Liberation Mono', monospace" opacity="0.8"><tspan fill="#9cdcfe">accuracy </tspan><tspan fill="#9cdcfe">value </tspan><tspan fill="#ce9178">, </tspan><tspan fill="#ce9178">word </tspan><tspan fill="#6a9955">count </tspan><tspan fill="#c8c8c8">) </tspan></text><text x="14.0" y="115.4" font-size="2.7" font-family="'Liberation Mono', monospace" opacity="0.8"><tspan fill="#dcdcaa">list </tspan><tspan fill="#c586c0">train </tspan><tspan fill="#9cdcfe">label </tspan><tspan fill="#9cdcfe">utf-8 </tspan><tspan fill="#c586c0">words </tspan></text><text x="17.2" y="122.2" font-size="2.7" font-family="'Liberation Mono', monospace" opacity="0.8"><tspan fill="#6a9955">data </tspan><tspan fill="#c8c8c8">fit </tspan><tspan fill="#c586c0">range </tspan><tspan fill="#dcdcaa">plot </tspan></text><text x="14.0" y="125.6" font-size="2.7" font-family="'Liberation Mono', monospace" opacity="0.8"><tspan fill="#dcdcaa">lower </tspan></text><text x="23.7" y="129.0" font-size="2.7" font-family="'Liberation Mono', monospace" opacity="0.8"><tspan fill="#ce9178">fit </tspan><tspan fill="#c586c0">as </tspan><tspan fill="#dcdcaa">transform </tspan></text><text x="20.5" y="132.4" font-size="2.7" font-family="'Liberation Mono', monospace" opacity="0.8"><tspan fill="#dcdcaa">train </tspan><tspan fill="#6a9955">transform </tspan><tspan fill="#c586c0">path </tspan><tspan fill="#ce9178">path </tspan><tspan fill="#dcdcaa">join </tspan></text><text x="14.0" y="139.2" font-size="2.7" font-family="'Liberation Mono', monospace" opacity="0.8"><tspan fill="#6a9955">i </tspan></text><text x="14.0" y="142.6" font-size="2.7" font-family="'Liberation Mono', monospace" opacity="0.8"><tspan fill="#c586c0">title </tspan></text><text x="23.7" y="146.0" font-size="2.7" font-family="'Liberation Mono', monospace" opacity="0.8"><tspan fill="#dcdcaa">fit </tspan><tspan fill="#9cdcfe">with </tspan><tspan fill="#dcdcaa">score </tspan><tspan fill="#c8c8c8">None </tspan><tspan fill="#c8c8c8">for </tspan></text><text x="23.7" y="149.4" font-size="2.7" font-family="'Liberation Mono', monospace" opacity="0.8"><tspan fill="#6a9955">[] </tspan><tspan fill="#c8c8c8">from </tspan><tspan fill="#6a9955">len </tspan><tspan fill="#9cdcfe">y </tspan></text><text x="14.0" y="152.8" font-size="2.7" font-family="'Liberation Mono', monospace" opacity="0.8"><tspan fill="#dcdcaa">join </tspan><tspan fill="#c8c8c8">print </tspan><tspan fill="#ce9178">sorted </tspan><tspan fill="#ce9178">== </tspan><tspan fill="#6a9955">else </tspan><tspan fill="#ce9178">list </tspan><tspan fill="#9cdcfe">len </tspan><tspan fill="#dcdcaa">len </tspan><tspan fill="#9cdcfe">True </tspan></text><text x="14.0" y="156.2" font-size="2.7" font-family="'Liberation Mono', monospace" opacity="0.8"><tspan fill="#6a9955">[] </tspan></text><text x="14.0" y="159.6" font-size="2.7" font-family="'Liberation Mono', monospace" opacity="0.8"><tspan fill="#9cdcfe">train </tspan><tspan fill="#dcdcaa">1 </tspan><tspan fill="#dcdcaa">encoding </tspan><tspan fill="#c8c8c8">ylabel </tspan><tspan fill="#ce9178">import </tspan></text><text x="14.0" y="163.0" font-size="2.7" font-family="'Liberation Mono', monospace" opacity="0.8"><tspan fill="#c8c8c8">if </tspan></text><text x="14.0" y="169.8" font-size="2.7" font-family="'Liberation Mono', monospace" opacity="0.8"><tspan fill="#dcdcaa">log </tspan><tspan fill="#ce9178">np </tspan><tspan fill="#ce9178">open </tspan><tspan fill="#ce9178">Counter </tspan><tspan fill="#c586c0">Counter </tspan><tspan fill="#dcdcaa">word </tspan><tspan fill="#ce9178">model </tspan><tspan fill="#9cdcfe">vectorizer </tspan><tspan fill="#6a9955">len </tspan></text><text x="14.0" y="173.2" font-size="2.7" font-family="'Liberation Mono', monospace" opacity="0.8"><tspan fill="#c8c8c8">) </tspan><tspan fill="#9cdcfe">in </tspan><tspan fill="#ce9178">title </tspan><tspan fill="#dcdcaa">== </tspan><tspan fill="#6a9955">in </tspan><tspan fill="#dcdcaa">utf-8 </tspan><tspan fill="#c8c8c8">matplotlib.pyplot </tspan></text><text x="17.2" y="176.6" font-size="2.7" font-family="'Liberation Mono', monospace" opacity="0.8"><tspan fill="#c586c0">path </tspan><tspan fill="#6a9955">def </tspan><tspan fill="#9cdcfe">range </tspan><tspan fill="#dcdcaa">train </tspan><tspan fill="#c586c0">: </tspan><tspan fill="#c8c8c8">encoding </tspan><tspan fill="#9cdcfe">encoding </tspan></text><text x="14.0" y="180.0" font-size="2.7" font-family="'Liberation Mono', monospace" opacity="0.8"><tspan fill="#ce9178">( </tspan><tspan fill="#ce9178">len </tspan><tspan fill="#6a9955">len </tspan><tspan fill="#c586c0">1 </tspan><tspan fill="#6a9955">count </tspan><tspan fill="#c586c0">value </tspan></text><rect x="0" y="175" width="318" height="4.3" fill="#161616"/></svg></div>
<div class="t1" style="left:285px;top:642.5px">Florian Seiler-CAI NatLPr-A1</div>
<div class="t2" style="left:285px;top:665.5px">CAI_NatLPr-Assignment_1 - Sommer 2025</div>
<svg class="abs" style="left:284.5px;top:691.0px" width="13" height="10"><path d="M.5 9 L6.5 3.8 L10 3.8 L4 9z" fill="#62a052"/><path d="M4 9 L10 3.8" stroke="#c8f5b8" stroke-width=".7"/><path d="M7 9 L11.5 5.5 L11.5 9z" fill="#6f786f"/><rect x="8" y="0.3" width="3.8" height="1.2" fill="#9ca0aa"/></svg>
<div class="abs" style="left:288px;top:701.0px;width:31px;height:16px;overflow:hidden"><div class="av" style="left:-4.06px;top:2.1px">avatar</div></div>
<div class="t3" style="left:325.5px;top:697.5px">Gokul Srinivasagan</div>
<div style="position:absolute;left:618px;top:442px"><svg class="th" width="318" height="179.3" style="background:#151515"><rect x="0" y="0" width="318" height="7" fill="#1a1a1a"/><text x="8" y="5" font-size="2.6" fill="#b0b0b0" opacity="0.8" font-family="'Liberation Sans', sans-serif">File</text><text x="18.4" y="5" font-size="2.6" fill="#b0b0b0" opacity="0.8" font-family="'Liberation Sans', sans-serif">Edit</text><text x="28.799999999999997" y="5" font-size="2.6" fill="#b0b0b0" opacity="0.8" font-family="'Liberation Sans', sans-serif">Selection</text><text x="47.199999999999996" y="5" font-size="2.6" fill="#b0b0b0" opacity="0.8" font-family="'Liberation Sans', sans-serif">View</text><text x="57.599999999999994" y="5" font-size="2.6" fill="#b0b0b0" opacity="0.8" font-family="'Liberation Sans', sans-serif">Go</text><text x="64.8" y="5" font-size="2.6" fill="#b0b0b0" opacity="0.8" font-family="'Liberation Sans', sans-serif">Run</text><text x="73.6" y="5" font-size="2.6" fill="#b0b0b0" opacity="0.8" font-family="'Liberation Sans', sans-serif">Terminal</text><text x="90.39999999999999" y="5" font-size="2.6" fill="#b0b0b0" opacity="0.8" font-family="'Liberation Sans', sans-serif">Help</text><rect x="120" y="1.5" width="90" height="4" fill="#2b2b2b" rx="1"/><rect x="0" y="7" width="8" height="172.3" fill="#121212"/><rect x="2.5" y="12" width="4" height="4" fill="#6a6a6a" opacity="0.7" rx="0.6"/><rect x="2.5" y="21" width="4" height="4" fill="#6a6a6a" opacity="0.7" rx="0.6"/><rect x="2.5" y="30" width="4" height="4" fill="#6a6a6a" opacity="0.7" rx="0.6"/><rect x="2.5" y="39" width="4" height="4" fill="#6a6a6a" opacity="0.7" rx="0.6"/><rect x="2.5" y="48" width="4" height="4" fill="#6a6a6a" opacity="0.7" rx="0.6"/><rect x="2.5" y="57" width="4" height="4" fill="#6a6a6a" opacity="0.7" rx="0.6"/><text x="12" y="10.5" font-size="2.4" fill="#e06070" opacity="0.8" font-family="'Liberation Sans', sans-serif">Zipfs_law.ipynb</text><text x="12" y="15" font-size="2.2" fill="#999" opacity="0.6" font-family="'Liberation Sans', sans-serif">C: > Users > ... > Data > Zipfs_law.ipynb > import matplotlib.pyplot as plt</text><text x="12" y="19" font-size="2.2" fill="#999" opacity="0.6" font-family="'Liberation Sans', sans-serif">+ Code  + Markdown  Run All  Clear All Outputs  Outline</text><rect x="9" y="23" width="1" height="152" fill="#2a5a9a" opacity="0.6"/><text x="21.0" y="34.6" font-size="2.6" font-family="'Liberation Mono', monospace" opacity="0.65"><tspan fill="#c8c8c8">def </tspan></text><text x="24.1" y="37.9" font-size="2.6" font-family="'Liberation Mono', monospace" opacity="0.65"><tspan fill="#9cdcfe">0 </tspan></text><text x="24.1" y="41.2" font-size="2.6" font-family="'Liberation Mono', monospace" opacity="0.65"><tspan fill="#c8c8c8">model </tspan><tspan fill="#9cdcfe">return </tspan></text><text x="24.1" y="44.5" font-size="2.6" font-family="'Liberation Mono', monospace" opacity="0.65"><tspan fill="#9cdcfe">data </tspan><tspan fill="#ce9178">freq </tspan><tspan fill="#c586c0">matplotlib.pyplot </tspan></text><text x="27.2" y="51.1" font-size="2.6" font-family="'Liberation Mono', monospace" opacity="0.65"><tspan fill="#9cdcfe">file </tspan><tspan fill="#9cdcfe">ylabel </tspan><tspan fill="#ce9178">text </tspan><tspan fill="#dcdcaa">word </tspan><tspan fill="#c8c8c8">freq </tspan></text><text x="24.1" y="54.4" font-size="2.6" font-family="'Liberation Mono', monospace" opacity="0.65"><tspan fill="#9cdcfe">join </tspan><tspan fill="#6a9955">, </tspan><tspan fill="#ce9178">utf-8 </tspan><tspan fill="#6a9955">np </tspan><tspan fill="#9cdcfe">items </tspan></text><text x="21.0" y="57.7" font-size="2.6" font-family="'Liberation Mono', monospace" opacity="0.65"><tspan fill="#c8c8c8">xlabel </tspan></text><text x="24.1" y="61.0" font-size="2.6" font-family="'Liberation Mono', monospace" opacity="0.65"><tspan fill="#dcdcaa">ylabel </tspan><tspan fill="#c586c0">fit </tspan><tspan fill="#9cdcfe">split </tspan><tspan fill="#c8c8c8">join </tspan><tspan fill="#9cdcfe">figure </tspan></text><text x="24.1" y="64.3" font-size="2.6" font-family="'Liberation Mono', monospace" opacity="0.65"><tspan fill="#c586c0">: </tspan><tspan fill="#ce9178">( </tspan><tspan fill="#9cdcfe">label </tspan><tspan fill="#c8c8c8">else </tspan></text><text x="24.1" y="67.6" font-size="2.6" font-family="'Liberation Mono', monospace" opacity="0.65"><tspan fill="#dcdcaa">True </tspan><tspan fill="#c8c8c8">vectorizer </tspan><tspan fill="#9cdcfe">freq </tspan><tspan fill="#6a9955">return </tspan><tspan fill="#c8c8c8">predict </tspan></text><text x="24.1" y="70.9" font-size="2.6" font-family="'Liberation Mono', monospace" opacity="0.65"><tspan fill="#c586c0">label </tspan><tspan fill="#c8c8c8">label </tspan><tspan fill="#ce9178">label </tspan><tspan fill="#9cdcfe">join </tspan><tspan fill="#dcdcaa">open </tspan><tspan fill="#ce9178">lower </tspan></text><text x="24.1" y="74.2" font-size="2.6" font-family="'Liberation Mono', monospace" opacity="0.65"><tspan fill="#ce9178">collections </tspan><tspan fill="#dcdcaa">np </tspan></text><text x="21.0" y="77.5" font-size="2.6" font-family="'Liberation Mono', monospace" opacity="0.65"><tspan fill="#c8c8c8">title </tspan><tspan fill="#9cdcfe">accuracy </tspan><tspan fill="#ce9178">freq </tspan></text><text x="27.2" y="80.8" font-size="2.6" font-family="'Liberation Mono', monospace" opacity="0.65"><tspan fill="#6a9955">append </tspan><tspan fill="#c8c8c8">else </tspan></text><text x="30.4" y="87.4" font-size="2.6" font-family="'Liberation Mono', monospace" opacity="0.65"><tspan fill="#9cdcfe">in </tspan><tspan fill="#dcdcaa">log </tspan><tspan fill="#dcdcaa">None </tspan><tspan fill="#ce9178">for </tspan><tspan fill="#c8c8c8">1 </tspan><tspan fill="#ce9178">join </tspan></text><text x="21.0" y="90.7" font-size="2.6" font-family="'Liberation Mono', monospace" opacity="0.65"><tspan fill="#9cdcfe">True </tspan><tspan fill="#6a9955">join </tspan><tspan fill="#6a9955">for </tspan><tspan fill="#9cdcfe">path </tspan></text><text x="27.2" y="94.0" font-size="2.6" font-family="'Liberation Mono', monospace" opacity="0.65"><tspan fill="#6a9955">lower </tspan><tspan fill="#c8c8c8">for </tspan></text><text x="21.0" y="97.3" font-size="2.6" font-family="'Liberation Mono', monospace" opacity="0.65"><tspan fill="#9cdcfe">dict </tspan><tspan fill="#6a9955">model </tspan><tspan fill="#9cdcfe">label </tspan><tspan fill="#c8c8c8">value </tspan><tspan fill="#dcdcaa">print </tspan></text><text x="27.2" y="100.6" font-size="2.6" font-family="'Liberation Mono', monospace" opacity="0.65"><tspan fill="#c586c0">in </tspan><tspan fill="#6a9955">Counter </tspan><tspan fill="#c8c8c8">utf-8 </tspan><tspan fill="#9cdcfe">[] </tspan><tspan fill="#9cdcfe">fit </tspan><tspan fill="#ce9178">ylabel </tspan></text><text x="24.1" y="103.9" font-size="2.6" font-family="'Liberation Mono', monospace" opacity="0.65"><tspan fill="#dcdcaa">range </tspan><tspan fill="#c586c0">train </tspan><tspan fill="#ce9178">re </tspan><tspan fill="#6a9955">open </tspan></text><text x="24.1" y="107.2" font-size="2.6" font-family="'Liberation Mono', monospace" opacity="0.65"><tspan fill="#c586c0">lower </tspan><tspan fill="#c8c8c8">re </tspan><tspan fill="#dcdcaa">sorted </tspan><tspan fill="#ce9178">else </tspan><tspan fill="#9cdcfe">xlabel </tspan><tspan fill="#dcdcaa">ylabel </tspan></text><text x="27.2" y="110.5" font-size="2.6" font-family="'Liberation Mono', monospace" opacity="0.65"><tspan fill="#c8c8c8">range </tspan><tspan fill="#9cdcfe">from </tspan></text><text x="24.1" y="113.8" font-size="2.6" font-family="'Liberation Mono', monospace" opacity="0.65"><tspan fill="#6a9955">collections </tspan></text><text x="30.4" y="117.1" font-size="2.6" font-family="'Liberation Mono', monospace" opacity="0.65"><tspan fill="#9cdcfe">np </tspan></text><text x="24.1" y="120.4" font-size="2.6" font-family="'Liberation Mono', monospace" opacity="0.65"><tspan fill="#6a9955">1 </tspan><tspan fill="#6a9955">return </tspan><tspan fill="#c8c8c8">for </tspan><tspan fill="#c586c0">, </tspan><tspan fill="#c8c8c8">log </tspan></text><text x="24.1" y="123.7" font-size="2.6" font-family="'Liberation Mono', monospace" opacity="0.65"><tspan fill="#9cdcfe">in </tspan><tspan fill="#ce9178">as </tspan><tspan fill="#dcdcaa">from </tspan><tspan fill="#ce9178">transform </tspan><tspan fill="#c8c8c8">as </tspan></text><text x="27.2" y="127.0" font-size="2.6" font-family="'Liberation Mono', monospace" opacity="0.65"><tspan fill="#9cdcfe">items </tspan><tspan fill="#6a9955">dict </tspan><tspan fill="#6a9955">sub </tspan><tspan fill="#c8c8c8">open </tspan></text><text x="24.1" y="133.6" font-size="2.6" font-family="'Liberation Mono', monospace" opacity="0.65"><tspan fill="#6a9955">path </tspan><tspan fill="#c586c0">figure </tspan><tspan fill="#c8c8c8">split </tspan><tspan fill="#c586c0">word </tspan><tspan fill="#6a9955">encoding </tspan></text><text x="24.1" y="140.2" font-size="2.6" font-family="'Liberation Mono', monospace" opacity="0.65"><tspan fill="#9cdcfe">plt </tspan><tspan fill="#ce9178">x </tspan></text><text x="24.1" y="143.5" font-size="2.6" font-family="'Liberation Mono', monospace" opacity="0.65"><tspan fill="#c8c8c8">data </tspan><tspan fill="#c8c8c8">items </tspan><tspan fill="#c8c8c8">== </tspan><tspan fill="#c8c8c8">log </tspan><tspan fill="#c586c0">, </tspan></text><text x="21.0" y="146.8" font-size="2.6" font-family="'Liberation Mono', monospace" opacity="0.65"><tspan fill="#9cdcfe">join </tspan><tspan fill="#ce9178">predict </tspan><tspan fill="#9cdcfe">read </tspan><tspan fill="#c586c0">import </tspan><tspan fill="#c586c0">if </tspan></text><text x="24.1" y="150.1" font-size="2.6" font-family="'Liberation Mono', monospace" opacity="0.65"><tspan fill="#6a9955">) </tspan><tspan fill="#ce9178">y </tspan><tspan fill="#6a9955">figure </tspan><tspan fill="#6a9955">lambda </tspan><tspan fill="#ce9178">, </tspan></text><text x="24.1" y="153.4" font-size="2.6" font-family="'Liberation Mono', monospace" opacity="0.65"><tspan fill="#6a9955">as </tspan><tspan fill="#dcdcaa">lambda </tspan></text><text x="30.4" y="156.7" font-size="2.6" font-family="'Liberation Mono', monospace" opacity="0.65"><tspan fill="#ce9178">matplotlib.pyplot </tspan><tspan fill="#9cdcfe">[] </tspan></text><text x="30.4" y="160.0" font-size="2.6" font-family="'Liberation Mono', monospace" opacity="0.65"><tspan fill="#c8c8c8">sub </tspan></text><text x="21.0" y="163.3" font-size="2.6" font-family="'Liberation Mono', monospace" opacity="0.65"><tspan fill="#c586c0">matplotlib.pyplot </tspan><tspan fill="#ce9178">file </tspan><tspan fill="#ce9178">def </tspan></text><text x="30.4" y="166.6" font-size="2.6" font-family="'Liberation Mono', monospace" opacity="0.65"><tspan fill="#ce9178">words </tspan></text><text x="27.2" y="173.2" font-size="2.6" font-family="'Liberation Mono', monospace" opacity="0.65"><tspan fill="#dcdcaa">open </tspan><tspan fill="#c8c8c8">file </tspan><tspan fill="#c586c0">show </tspan><tspan fill="#c586c0">list </tspan><tspan fill="#dcdcaa">word </tspan><tspan fill="#c586c0">sub </tspan></text><text x="21.0" y="176.5" font-size="2.6" font-family="'Liberation Mono', monospace" opacity="0.65"><tspan fill="#c586c0">list </tspan><tspan fill="#ce9178">matplotlib.pyplot </tspan><tspan fill="#9cdcfe">label </tspan><tspan fill="#dcdcaa">1 </tspan></text><text x="27.2" y="179.8" font-size="2.6" font-family="'Liberation Mono', monospace" opacity="0.65"><tspan fill="#6a9955">value </tspan><tspan fill="#ce9178">figure </tspan><tspan fill="#6a9955">: </tspan><tspan fill="#c8c8c8">self </tspan><tspan fill="#9cdcfe">== </tspan></text><rect x="0" y="175.3" width="318" height="4" fill="#181818"/><rect x="0" y="175.3" width="6" height="4" fill="#2a6ab0"/></svg></div>
<div class="t1" style="left:621px;top:642.5px">Felix Boyke-CAI NatLPr-A1</div>
<div class="t2" style="left:621px;top:665.5px">CAI_NatLPr-Assignment_1 - Sommer 2025</div>
<svg class="abs" style="left:620.5px;top:691.0px" width="13" height="10"><path d="M.5 9 L6.5 3.8 L10 3.8 L4 9z" fill="#62a052"/><path d="M4 9 L10 3.8" stroke="#c8f5b8" stroke-width=".7"/><path d="M7 9 L11.5 5.5 L11.5 9z" fill="#6f786f"/><rect x="8" y="0.3" width="3.8" height="1.2" fill="#9ca0aa"/></svg>
<div class="abs" style="left:624px;top:701.0px;width:31px;height:16px;overflow:hidden"><div class="av" style="left:-4.06px;top:2.1px">avatar</div></div>
<div class="t3" style="left:661.5px;top:697.5px">Gokul Srinivasagan</div>
<div style="position:absolute;left:954px;top:442px"><svg class="th" width="318" height="179.3" style="background:#383838"><defs><linearGradient id="rb" x1="0" x2="1"><stop offset="0" stop-color="#6a0a1a"/><stop offset="1" stop-color="#7c0c20"/></linearGradient></defs><rect x="0" y="0" width="318" height="15" fill="url(#rb)"/><rect x="6" y="0.5" width="38" height="5" fill="#7e0e22" rx="1"/><text x="10" y="4.2" font-size="2.4" fill="#e8c8cc" opacity="0.7" font-family="'Liberation Sans', sans-serif">Kostenlose Logo...  x</text><text x="52" y="4.2" font-size="2.4" fill="#e8c8cc" opacity="0.7" font-family="'Liberation Sans', sans-serif">Python Monkey   x</text><rect x="28" y="8" width="260" height="4.5" fill="#5a0814" rx="2"/><text x="33" y="11.4" font-size="2.6" fill="#eee" opacity="0.65" font-family="'Liberation Sans', sans-serif">colab.research.google.com/drive/1aBcDeFgHiJkLmNoPqRsTuVwXyZ#scrollTo=First</text><rect x="0" y="15" width="318" height="25" fill="#2e2e2e"/><g fill="none" stroke="#f9ab00" stroke-width="1.8"><circle cx="7" cy="22.5" r="2.8"/><circle cx="11.8" cy="22.5" r="2.8"/></g><text x="24" y="24" font-size="4.6" fill="#ececec" opacity="0.95" font-family="'Liberation Sans', sans-serif">First exercise</text><text x="18" y="30.5" font-size="3.1" fill="#d0d0d0" opacity="0.85" font-family="'Liberation Sans', sans-serif">File  Edit  View  Insert  Runtime  Tools  Help   All changes saved</text><text x="15" y="38" font-size="2.8" fill="#bbb" opacity="0.7" font-family="'Liberation Sans', sans-serif">+ Code  + Text</text><rect x="267" y="20" width="5" height="4" fill="#999" opacity="0.6"/><rect x="282" y="20" width="5" height="4" fill="#999" opacity="0.6"/><rect x="294" y="20" width="18" height="4" fill="#aaa" opacity="0.5"/><rect x="0" y="40" width="11" height="139.3" fill="#2c2c2c"/><rect x="3" y="45" width="5" height="4" fill="#888" opacity="0.6"/><rect x="3" y="56" width="5" height="4" fill="#888" opacity="0.6"/><rect x="3" y="67" width="5" height="4" fill="#888" opacity="0.6"/><rect x="3" y="78" width="5" height="4" fill="#888" opacity="0.6"/><rect x="3" y="89" width="5" height="4" fill="#888" opacity="0.6"/><text x="18" y="54.0" font-size="3.6" font-family="'Liberation Sans', sans-serif" fill="#ececec" opacity="0.9">findings this spam describe collection of model are describe a for you detection using are classifier Zipf is </text><text x="18" y="60.5" font-size="3.6" font-family="'Liberation Sans', sans-serif" fill="#ececec" opacity="0.9">at an your Zipf discussion with on your classifi</text><text x="18" y="69.0" font-size="3.6" font-family="'Liberation Sans', sans-serif" fill="#ececec" opacity="0.9">detection classifier provided the text and on findings your you are model spam SMS spam collection this model is pr</text><text x="18" y="75.8" font-size="3.6" font-family="'Liberation Sans', sans-serif" fill="#ececec" opacity="0.9">discussion it by using for a in document Zipf project and are document spam this model describe words it a discussi</text><text x="18" y="82.6" font-size="3.6" font-family="'Liberation Sans', sans-serif" fill="#ececec" opacity="0.9">findings for collection model pyth</text><rect x="18" y="90" width="192" height="90" fill="#1f1f1f"/><rect x="18" y="90" width="9" height="90" fill="#2c2c2c"/><circle cx="21.5" cy="96" r="2.4" fill="#ccc" opacity=".8"/><text x="29.0" y="97.0" font-size="3.4" font-family="'Liberation Mono', monospace" opacity="0.9"><tspan fill="#569cd6">self </tspan><tspan fill="#ce9178">test </tspan><tspan fill="#9cdcfe">score </tspan><tspan fill="#569cd6">predict </tspan><tspan fill="#ce9178">test </tspan><tspan fill="#b5cea8">transform </tspan><tspan fill="#b5cea8">join </tspan><tspan fill="#ce9178">file </tspan></text><text x="37.2" y="102.0" font-size="3.4" font-family="'Liberation Mono', monospace" opacity="0.9"><tspan fill="#ce9178">0 </tspan><tspan fill="#6a9955">1 </tspan><tspan fill="#6a9955">split </tspan><tspan fill="#ce9178">show </tspan><tspan fill="#ce9178">as </tspan><tspan fill="#b5cea8">path </tspan></text><text x="41.2" y="112.0" font-size="3.4" font-family="'Liberation Mono', monospace" opacity="0.9"><tspan fill="#ce9178">+= </tspan><tspan fill="#b5cea8">train </tspan><tspan fill="#b5cea8">return </tspan><tspan fill="#6a9955">np </tspan><tspan fill="#569cd6">figure </tspan><tspan fill="#569cd6">read </tspan><tspan fill="#6a9955">read </tspan></text><text x="29.0" y="117.0" font-size="3.4" font-family="'Liberation Mono', monospace" opacity="0.9"><tspan fill="#6a9955">data </tspan><tspan fill="#d4d4d4">key </tspan><tspan fill="#d4d4d4">value </tspan><tspan fill="#6a9955">show </tspan><tspan fill="#6a9955">+= </tspan><tspan fill="#d4d4d4">path </tspan><tspan fill="#9cdcfe">transform </tspan><tspan fill="#9cdcfe">open </tspan></text><text x="29.0" y="122.0" font-size="3.4" font-family="'Liberation Mono', monospace" opacity="0.9"><tspan fill="#d4d4d4">transform </tspan><tspan fill="#9cdcfe">test </tspan><tspan fill="#9cdcfe">print </tspan><tspan fill="#b5cea8">+= </tspan><tspan fill="#ce9178">for </tspan><tspan fill="#569cd6">word </tspan></text><text x="33.1" y="132.0" font-size="3.4" font-family="'Liberation Mono', monospace" opacity="0.9"><tspan fill="#ce9178">sorted </tspan><tspan fill="#9cdcfe">join </tspan><tspan fill="#569cd6">= </tspan><tspan fill="#ce9178">xlabel </tspan><tspan fill="#6a9955">np </tspan></text><text x="41.2" y="137.0" font-size="3.4" font-family="'Liberation Mono', monospace" opacity="0.9"><tspan fill="#6a9955">key </tspan><tspan fill="#569cd6">text </tspan><tspan fill="#ce9178">import </tspan><tspan fill="#9cdcfe">count </tspan><tspan fill="#ce9178">) </tspan><tspan fill="#569cd6">== </tspan><tspan fill="#6a9955">label </tspan><tspan fill="#b5cea8">) </tspan></text><text x="37.2" y="142.0" font-size="3.4" font-family="'Liberation Mono', monospace" opacity="0.9"><tspan fill="#9cdcfe">freq </tspan><tspan fill="#9cdcfe">collections </tspan><tspan fill="#9cdcfe">np </tspan><tspan fill="#569cd6">, </tspan></text><text x="33.1" y="147.0" font-size="3.4" font-family="'Liberation Mono', monospace" opacity="0.9"><tspan fill="#ce9178">path </tspan><tspan fill="#d4d4d4">value </tspan><tspan fill="#ce9178">log </tspan><tspan fill="#ce9178">lambda </tspan><tspan fill="#9cdcfe">return </tspan><tspan fill="#d4d4d4">figure </tspan><tspan fill="#6a9955">freq </tspan><tspan fill="#d4d4d4">key </tspan></text><text x="29.0" y="152.0" font-size="3.4" font-family="'Liberation Mono', monospace" opacity="0.9"><tspan fill="#569cd6">( </tspan><tspan fill="#ce9178">None </tspan><tspan fill="#9cdcfe">for </tspan><tspan fill="#6a9955">log </tspan><tspan fill="#ce9178">plt </tspan><tspan fill="#b5cea8">score </tspan><tspan fill="#ce9178">x </tspan><tspan fill="#569cd6">ylabel </tspan></text><text x="41.2" y="157.0" font-size="3.4" font-family="'Liberation Mono', monospace" opacity="0.9"><tspan fill="#d4d4d4">sorted </tspan><tspan fill="#ce9178">score </tspan></text><text x="33.1" y="162.0" font-size="3.4" font-family="'Liberation Mono', monospace" opacity="0.9"><tspan fill="#b5cea8">1 </tspan><tspan fill="#d4d4d4">xlabel </tspan><tspan fill="#ce9178">accuracy </tspan><tspan fill="#b5cea8">: </tspan><tspan fill="#6a9955">for </tspan></text><text x="29.0" y="172.0" font-size="3.4" font-family="'Liberation Mono', monospace" opacity="0.9"><tspan fill="#d4d4d4">encoding </tspan><tspan fill="#9cdcfe">, </tspan><tspan fill="#569cd6">show </tspan><tspan fill="#9cdcfe">ylabel </tspan></text><text x="29.0" y="177.0" font-size="3.4" font-family="'Liberation Mono', monospace" opacity="0.9"><tspan fill="#9cdcfe">with </tspan><tspan fill="#ce9178">import </tspan><tspan fill="#b5cea8">utf-8 </tspan><tspan fill="#569cd6">score </tspan><tspan fill="#b5cea8">ylabel </tspan></text><rect x="210" y="40" width="1" height="139" fill="#444"/><rect x="211" y="40" width="107" height="139.3" fill="#333333"/><text x="220" y="47" font-size="2.8" fill="#ddd" opacity="0.8" font-family="'Liberation Sans', sans-serif">Files  x</text><rect x="220" y="49" width="17" height="1" fill="#ccc" opacity="0.7"/><rect x="223" y="56" width="5" height="5" fill="#bbb" opacity="0.6"/><rect x="235" y="56" width="5" height="5" fill="#bbb" opacity="0.6"/><rect x="247" y="56" width="5" height="5" fill="#bbb" opacity="0.6"/><rect x="259" y="56" width="5" height="5" fill="#bbb" opacity="0.6"/><rect x="227" y="66.0" width="4" height="5" fill="#aaa" opacity="0.7"/><text x="234" y="70.0" font-size="2.8" fill="#ddd" opacity="0.75" font-family="'Liberation Sans', sans-serif"></text><rect x="227" y="74.4" width="4" height="5" fill="#aaa" opacity="0.7"/><text x="234" y="78.4" font-size="2.8" fill="#ddd" opacity="0.75" font-family="'Liberation Sans', sans-serif">sample_data</text><rect x="227" y="82.8" width="4" height="5" fill="#aaa" opacity="0.7"/><text x="234" y="86.8" font-size="2.8" fill="#ddd" opacity="0.75" font-family="'Liberation Sans', sans-serif">SMSSpamCollection</text><rect x="227" y="91.2" width="4" height="5" fill="#aaa" opacity="0.7"/><text x="234" y="95.2" font-size="2.8" fill="#ddd" opacity="0.75" font-family="'Liberation Sans', sans-serif">assignment_3_solution.ipynb</text><rect x="227" y="99.6" width="4" height="5" fill="#aaa" opacity="0.7"/><text x="234" y="103.6" font-size="2.8" fill="#ddd" opacity="0.75" font-family="'Liberation Sans', sans-serif">dataset.arr</text><rect x="227" y="108.0" width="4" height="5" fill="#aaa" opacity="0.7"/><text x="234" y="112.0" font-size="2.8" fill="#ddd" opacity="0.75" font-family="'Liberation Sans', sans-serif">jungle_book.txt</text><rect x="227" y="116.4" width="4" height="5" fill="#aaa" opacity="0.7"/><text x="234" y="120.4" font-size="2.8" fill="#ddd" opacity="0.75" font-family="'Liberation Sans', sans-serif">wiki.fasttext</text><rect x="227" y="124.80000000000001" width="4" height="5" fill="#aaa" opacity="0.7"/><text x="234" y="128.8" font-size="2.8" fill="#ddd" opacity="0.75" font-family="'Liberation Sans', sans-serif">wiki.unk</text><rect x="220" y="175" width="27" height="1.5" fill="#ccc" opacity="0.5"/><rect x="257" y="132" width="61" height="47.3" fill="#070507"/><ellipse cx="305" cy="140" rx="13" ry="8" fill="#a04a98" opacity=".45"/><path d="M293 133 L300 133 L298 150z" fill="#d080d0" opacity=".35"/><ellipse cx="287" cy="160" rx="7" ry="11" fill="#1a1010"/><ellipse cx="287.5" cy="163" rx="4.5" ry="6.5" fill="#4a3028"/><path d="M305 168 h12 v11 h-12z" fill="#cfcfcf" opacity=".35"/><path d="M307 168v11M310 168v11M313 168v11" stroke="#eee" stroke-width=".6" opacity=".6"/><rect x="0" y="176" width="3" height="3" fill="#4caf50"/></svg></div>
<div class="t1" style="left:957px;top:642.5px">Baatarbileg Erkhembaya-CAI NatLPr-A1</div>
<div class="t2" style="left:957px;top:665.5px">CAI_NatLPr-Assignment_1 - Sommer 2025</div>
<svg class="abs" style="left:956.5px;top:691.0px" width="13" height="10"><path d="M.5 9 L6.5 3.8 L10 3.8 L4 9z" fill="#62a052"/><path d="M4 9 L10 3.8" stroke="#c8f5b8" stroke-width=".7"/><path d="M7 9 L11.5 5.5 L11.5 9z" fill="#6f786f"/><rect x="8" y="0.3" width="3.8" height="1.2" fill="#9ca0aa"/></svg>
<div class="abs" style="left:960px;top:701.0px;width:31px;height:16px;overflow:hidden"><div class="av" style="left:-4.06px;top:2.1px">avatar</div></div>
<div class="t3" style="left:997.5px;top:697.5px">Gokul Srinivasagan</div>
<div style="position:absolute;left:1290px;top:442px"><svg class="th" width="318" height="179.3" style="background:#000000"><rect x="1" y="1" width="156" height="164" fill="#1c1c1c"/><rect x="1" y="1" width="156" height="6" fill="#181818"/><rect x="1" y="7" width="8" height="158" fill="#171717"/><text x="12" y="12" font-size="2.4" fill="#ddd" opacity="0.7" font-family="'Liberation Sans', sans-serif">Assignment1.ipynb  x</text><text x="10" y="16.5" font-size="2" fill="#999" opacity="0.6" font-family="'Liberation Sans', sans-serif">C: > Users > ... > Assignment1.ipynb > M Assignment 1 > import re</text><text x="12" y="20.5" font-size="2" fill="#999" opacity="0.6" font-family="'Liberation Sans', sans-serif">+ Code  + Markdown  Run All  Clear All Outputs  Outline</text><text x="15" y="25.5" font-size="2.2" font-family="'Liberation Sans', sans-serif" fill="#cccccc" opacity="0.6">corpus in python this and the it provided using detection an of be python your words Zipf Zipf is your corpus law this findings in frequency dataset i</text><text x="15" y="28.5" font-size="2.2" font-family="'Liberation Sans', sans-serif" fill="#cccccc" opacity="0.6">describe detection python your SMS corpus describe SMS of discuss</text><text x="29.4" y="38.0" font-size="2.6" font-family="'Liberation Mono', monospace" opacity="0.9"><tspan fill="#ce9178">matplotlib.pyplot </tspan><tspan fill="#6a9955">1 </tspan><tspan fill="#6a9955">freq </tspan><tspan fill="#9cdcfe">log </tspan><tspan fill="#c8c8c8">read </tspan></text><text x="26.2" y="41.0" font-size="2.6" font-family="'Liberation Mono', monospace" opacity="0.9"><tspan fill="#6a9955">None </tspan></text><text x="20.0" y="44.0" font-size="2.6" font-family="'Liberation Mono', monospace" opacity="0.9"><tspan fill="#c586c0">plot </tspan><tspan fill="#6a9955">collections </tspan><tspan fill="#c8c8c8">0 </tspan><tspan fill="#6a9955">ylabel </tspan><tspan fill="#ce9178">join </tspan></text><text x="20.0" y="47.0" font-size="2.6" font-family="'Liberation Mono', monospace" opacity="0.9"><tspan fill="#c586c0">train </tspan><tspan fill="#6a9955">log </tspan><tspan fill="#c586c0">file </tspan><tspan fill="#c8c8c8">def </tspan><tspan fill="#dcdcaa">len </tspan><tspan fill="#ce9178">: </tspan></text><text x="20.0" y="50.0" font-size="2.6" font-family="'Liberation Mono', monospace" opacity="0.9"><tspan fill="#dcdcaa">plot </tspan><tspan fill="#ce9178">0 </tspan><tspan fill="#ce9178">join </tspan></text><text x="26.2" y="53.0" font-size="2.6" font-family="'Liberation Mono', monospace" opacity="0.9"><tspan fill="#6a9955">train </tspan><tspan fill="#dcdcaa">ylabel </tspan><tspan fill="#c586c0">show </tspan><tspan fill="#6a9955">lambda </tspan><tspan fill="#c586c0">collections </tspan></text><text x="26.2" y="56.0" font-size="2.6" font-family="'Liberation Mono', monospace" opacity="0.9"><tspan fill="#ce9178">np </tspan><tspan fill="#dcdcaa">collections </tspan><tspan fill="#c586c0">train </tspan></text><text x="26.2" y="59.0" font-size="2.6" font-family="'Liberation Mono', monospace" opacity="0.9"><tspan fill="#c586c0">np </tspan><tspan fill="#ce9178">( </tspan><tspan fill="#c8c8c8">plot </tspan><tspan fill="#c8c8c8">read </tspan></text><text x="20.0" y="65.0" font-size="2.6" font-family="'Liberation Mono', monospace" opacity="0.9"><tspan fill="#c586c0">matplotlib.pyplot </tspan><tspan fill="#ce9178">x </tspan><tspan fill="#dcdcaa">else </tspan><tspan fill="#9cdcfe">plt </tspan><tspan fill="#ce9178">from </tspan><tspan fill="#6a9955">1 </tspan></text><text x="26.2" y="68.0" font-size="2.6" font-family="'Liberation Mono', monospace" opacity="0.9"><tspan fill="#c8c8c8">matplotlib.pyplot </tspan><tspan fill="#ce9178">lambda </tspan></text><text x="20.0" y="71.0" font-size="2.6" font-family="'Liberation Mono', monospace" opacity="0.9"><tspan fill="#ce9178">lambda </tspan><tspan fill="#c8c8c8">words </tspan><tspan fill="#c586c0">count </tspan><tspan fill="#c8c8c8">show </tspan><tspan fill="#6a9955">with </tspan></text><text x="29.4" y="74.0" font-size="2.6" font-family="'Liberation Mono', monospace" opacity="0.9"><tspan fill="#dcdcaa">as </tspan><tspan fill="#9cdcfe">model </tspan></text><text x="26.2" y="77.0" font-size="2.6" font-family="'Liberation Mono', monospace" opacity="0.9"><tspan fill="#c586c0">def </tspan><tspan fill="#c586c0">key </tspan><tspan fill="#9cdcfe">figure </tspan><tspan fill="#6a9955">figure </tspan></text><text x="23.1" y="80.0" font-size="2.6" font-family="'Liberation Mono', monospace" opacity="0.9"><tspan fill="#c586c0">{} </tspan><tspan fill="#c8c8c8">freq </tspan><tspan fill="#ce9178">score </tspan><tspan fill="#ce9178">for </tspan></text><text x="23.1" y="86.0" font-size="2.6" font-family="'Liberation Mono', monospace" opacity="0.9"><tspan fill="#6a9955">utf-8 </tspan><tspan fill="#6a9955">matplotlib.pyplot </tspan><tspan fill="#c8c8c8">as </tspan></text><text x="20.0" y="92.0" font-size="2.6" font-family="'Liberation Mono', monospace" opacity="0.9"><tspan fill="#c586c0">for </tspan><tspan fill="#c586c0">file </tspan><tspan fill="#ce9178">matplotlib.pyplot </tspan><tspan fill="#c8c8c8">if </tspan><tspan fill="#c586c0">append </tspan></text><text x="23.1" y="95.0" font-size="2.6" font-family="'Liberation Mono', monospace" opacity="0.9"><tspan fill="#9cdcfe">print </tspan></text><text x="20.0" y="98.0" font-size="2.6" font-family="'Liberation Mono', monospace" opacity="0.9"><tspan fill="#c586c0">x </tspan><tspan fill="#c586c0">open </tspan><tspan fill="#9cdcfe">open </tspan><tspan fill="#ce9178">0 </tspan></text><text x="20.0" y="101.0" font-size="2.6" font-family="'Liberation Mono', monospace" opacity="0.9"><tspan fill="#c586c0">plt </tspan><tspan fill="#9cdcfe">score </tspan><tspan fill="#c586c0">plt </tspan><tspan fill="#dcdcaa">) </tspan><tspan fill="#6a9955">list </tspan></text><text x="29.4" y="104.0" font-size="2.6" font-family="'Liberation Mono', monospace" opacity="0.9"><tspan fill="#9cdcfe">path </tspan><tspan fill="#c586c0">np </tspan><tspan fill="#ce9178">True </tspan><tspan fill="#dcdcaa">[] </tspan><tspan fill="#c8c8c8">) </tspan><tspan fill="#6a9955">lower </tspan></text><text x="26.2" y="107.0" font-size="2.6" font-family="'Liberation Mono', monospace" opacity="0.9"><tspan fill="#6a9955">from </tspan><tspan fill="#6a9955">1 </tspan><tspan fill="#dcdcaa">key </tspan><tspan fill="#c586c0">dict </tspan><tspan fill="#c586c0">== </tspan></text><text x="23.1" y="110.0" font-size="2.6" font-family="'Liberation Mono', monospace" opacity="0.9"><tspan fill="#c586c0">read </tspan><tspan fill="#9cdcfe">data </tspan><tspan fill="#c586c0">key </tspan></text><text x="20.0" y="113.0" font-size="2.6" font-family="'Liberation Mono', monospace" opacity="0.9"><tspan fill="#c8c8c8">ylabel </tspan></text><text x="20.0" y="116.0" font-size="2.6" font-family="'Liberation Mono', monospace" opacity="0.9"><tspan fill="#c586c0">== </tspan><tspan fill="#c8c8c8">matplotlib.pyplot </tspan><tspan fill="#dcdcaa">for </tspan><tspan fill="#c8c8c8">== </tspan><tspan fill="#9cdcfe">join </tspan><tspan fill="#9cdcfe">) </tspan></text><text x="23.1" y="119.0" font-size="2.6" font-family="'Liberation Mono', monospace" opacity="0.9"><tspan fill="#6a9955">open </tspan></text><text x="20.0" y="122.0" font-size="2.6" font-family="'Liberation Mono', monospace" opacity="0.9"><tspan fill="#c586c0">figure </tspan><tspan fill="#c8c8c8">print </tspan></text><text x="20.0" y="125.0" font-size="2.6" font-family="'Liberation Mono', monospace" opacity="0.9"><tspan fill="#c586c0">return </tspan></text><text x="26.2" y="128.0" font-size="2.6" font-family="'Liberation Mono', monospace" opacity="0.9"><tspan fill="#c586c0">score </tspan><tspan fill="#ce9178">figure </tspan><tspan fill="#9cdcfe">split </tspan><tspan fill="#c586c0">= </tspan><tspan fill="#c586c0">range </tspan><tspan fill="#ce9178">: </tspan></text><text x="23.1" y="134.0" font-size="2.6" font-family="'Liberation Mono', monospace" opacity="0.9"><tspan fill="#dcdcaa">text </tspan><tspan fill="#dcdcaa">, </tspan><tspan fill="#c586c0">for </tspan><tspan fill="#ce9178">accuracy </tspan><tspan fill="#c586c0">print </tspan><tspan fill="#9cdcfe">return </tspan><tspan fill="#ce9178">fit </tspan></text><text x="20.0" y="137.0" font-size="2.6" font-family="'Liberation Mono', monospace" opacity="0.9"><tspan fill="#9cdcfe">return </tspan><tspan fill="#c8c8c8">fit </tspan><tspan fill="#c8c8c8">log </tspan></text><text x="20.0" y="143.0" font-size="2.6" font-family="'Liberation Mono', monospace" opacity="0.9"><tspan fill="#dcdcaa">train </tspan><tspan fill="#9cdcfe">sorted </tspan><tspan fill="#9cdcfe">path </tspan><tspan fill="#dcdcaa">read </tspan><tspan fill="#9cdcfe">Counter </tspan><tspan fill="#dcdcaa">encoding </tspan></text><text x="26.2" y="146.0" font-size="2.6" font-family="'Liberation Mono', monospace" opacity="0.9"><tspan fill="#ce9178">key </tspan><tspan fill="#ce9178">for </tspan><tspan fill="#9cdcfe">plot </tspan></text><text x="20.0" y="158.0" font-size="2.6" font-family="'Liberation Mono', monospace" opacity="0.9"><tspan fill="#9cdcfe">len </tspan><tspan fill="#9cdcfe">: </tspan><tspan fill="#6a9955">ylabel </tspan><tspan fill="#6a9955">1 </tspan><tspan fill="#c586c0">== </tspan></text><text x="26.2" y="161.0" font-size="2.6" font-family="'Liberation Mono', monospace" opacity="0.9"><tspan fill="#c586c0">Counter </tspan><tspan fill="#9cdcfe">title </tspan></text><text x="20.0" y="164.0" font-size="2.6" font-family="'Liberation Mono', monospace" opacity="0.9"><tspan fill="#6a9955">self </tspan><tspan fill="#ce9178">key </tspan><tspan fill="#ce9178">matplotlib.pyplot </tspan></text><text x="23.1" y="167.0" font-size="2.6" font-family="'Liberation Mono', monospace" opacity="0.9"><tspan fill="#c8c8c8">items </tspan><tspan fill="#9cdcfe">as </tspan></text><rect x="1" y="161" width="156" height="4" fill="#181818"/><rect x="1" y="161" width="6" height="4" fill="#2a6ab0"/></svg></div>
<div class="t1" style="left:1293px;top:642.5px">Dominik Lohwasser-CAI NatLPr-A1</div>
<div class="t2" style="left:1293px;top:665.5px">CAI_NatLPr-Assignment_1 - Sommer 2025</div>
<svg class="abs" style="left:1292.5px;top:691.0px" width="13" height="10"><path d="M.5 9 L6.5 3.8 L10 3.8 L4 9z" fill="#62a052"/><path d="M4 9 L10 3.8" stroke="#c8f5b8" stroke-width=".7"/><path d="M7 9 L11.5 5.5 L11.5 9z" fill="#6f786f"/><rect x="8" y="0.3" width="3.8" height="1.2" fill="#9ca0aa"/></svg>
<div class="abs" style="left:1296px;top:701.0px;width:31px;height:16px;overflow:hidden"><div class="av" style="left:-4.06px;top:2.1px">avatar</div></div>
<div class="t3" style="left:1333.5px;top:697.5px">Gokul Srinivasagan</div>
<div style="position:absolute;left:282px;top:730px"><svg class="th" width="318" height="179.3" style="background:#1b1b1f"><rect x="0" y="0" width="318" height="7" fill="#141418"/><text x="10" y="5" font-size="2.6" fill="#bbb" opacity="0.8" font-family="'Liberation Sans', sans-serif">File</text><text x="20.4" y="5" font-size="2.6" fill="#bbb" opacity="0.8" font-family="'Liberation Sans', sans-serif">Edit</text><text x="30.799999999999997" y="5" font-size="2.6" fill="#bbb" opacity="0.8" font-family="'Liberation Sans', sans-serif">Selection</text><text x="49.199999999999996" y="5" font-size="2.6" fill="#bbb" opacity="0.8" font-family="'Liberation Sans', sans-serif">View</text><text x="59.599999999999994" y="5" font-size="2.6" fill="#bbb" opacity="0.8" font-family="'Liberation Sans', sans-serif">Go</text><text x="66.8" y="5" font-size="2.6" fill="#bbb" opacity="0.8" font-family="'Liberation Sans', sans-serif">Run</text><rect x="105" y="1.5" width="120" height="4" fill="#222226" rx="1"/><text x="150" y="4.8" font-size="2.6" fill="#bbb" opacity="0.7" font-family="'Liberation Sans', sans-serif">Practicum CTV</text><rect x="0" y="7" width="9" height="158" fill="#18181c"/><rect x="2.5" y="11" width="4" height="4" fill="#777" opacity="0.6" rx="0.6"/><rect x="2.5" y="22" width="4" height="4" fill="#777" opacity="0.6" rx="0.6"/><rect x="2.5" y="33" width="4" height="4" fill="#777" opacity="0.6" rx="0.6"/><rect x="2.5" y="44" width="4" height="4" fill="#777" opacity="0.6" rx="0.6"/><rect x="2.5" y="55" width="4" height="4" fill="#777" opacity="0.6" rx="0.6"/><rect x="2.5" y="66" width="4" height="4" fill="#777" opacity="0.6" rx="0.6"/><rect x="2.5" y="77" width="4" height="4" fill="#777" opacity="0.6" rx="0.6"/><rect x="9" y="7" width="47" height="158" fill="#1d1d21"/><text x="16" y="13" font-size="2.2" fill="#bbb" opacity="0.7" font-family="'Liberation Sans', sans-serif">EXPLORER</text><text x="13.0" y="20.0" font-size="2.6" fill="#cfcfd4" opacity="0.75" font-family="'Liberation Sans', sans-serif">PRAKTIKUM CTV</text><text x="14.5" y="25.5" font-size="2.6" fill="#cfcfd4" opacity="0.75" font-family="'Liberation Sans', sans-serif">A_ctl_CTV_1</text><text x="16.0" y="31.0" font-size="2.6" fill="#cfcfd4" opacity="0.75" font-family="'Liberation Sans', sans-serif">Assignment_1</text><text x="13.0" y="36.5" font-size="2.6" fill="#cfcfd4" opacity="0.75" font-family="'Liberation Sans', sans-serif">Datasets and resou...</text><text x="14.5" y="42.0" font-size="2.6" fill="#cfcfd4" opacity="0.75" font-family="'Liberation Sans', sans-serif">ctv_plot</text><text x="16.0" y="47.5" font-size="2.6" fill="#cfcfd4" opacity="0.75" font-family="'Liberation Sans', sans-serif">Assignment1.1.zip</text><text x="13.0" y="53.0" font-size="2.6" fill="#cfcfd4" opacity="0.75" font-family="'Liberation Sans', sans-serif">Datasets and resou...</text><text x="14.5" y="58.5" font-size="2.6" fill="#cfcfd4" opacity="0.75" font-family="'Liberation Sans', sans-serif">A_ctl_CTV_2</text><text x="16.0" y="64.0" font-size="2.6" fill="#cfcfd4" opacity="0.75" font-family="'Liberation Sans', sans-serif">Assignment_2</text><text x="13.0" y="69.5" font-size="2.6" fill="#cfcfd4" opacity="0.75" font-family="'Liberation Sans', sans-serif">Albert_Didkovskyi...</text><text x="14.5" y="75.0" font-size="2.6" fill="#cfcfd4" opacity="0.75" font-family="'Liberation Sans', sans-serif">Assignment Collec...</text><text x="16.0" y="80.5" font-size="2.6" fill="#cfcfd4" opacity="0.75" font-family="'Liberation Sans', sans-serif">Assignment 1 copy</text><text x="13.0" y="86.0" font-size="2.6" fill="#cfcfd4" opacity="0.75" font-family="'Liberation Sans', sans-serif">Assignment2.ipynb</text><text x="14.5" y="91.5" font-size="2.6" fill="#cfcfd4" opacity="0.75" font-family="'Liberation Sans', sans-serif">Results</text><text x="16.0" y="97.0" font-size="2.6" fill="#cfcfd4" opacity="0.75" font-family="'Liberation Sans', sans-serif">readme</text><text x="13.0" y="102.5" font-size="2.6" fill="#cfcfd4" opacity="0.75" font-family="'Liberation Sans', sans-serif">SMSSpamCollection</text><text x="14.5" y="108.0" font-size="2.6" fill="#cfcfd4" opacity="0.75" font-family="'Liberation Sans', sans-serif">Assignment2.zip</text><text x="16.0" y="113.5" font-size="2.6" fill="#cfcfd4" opacity="0.75" font-family="'Liberation Sans', sans-serif">sms+spam+collecti...</text><text x="13.0" y="119.0" font-size="2.6" fill="#cfcfd4" opacity="0.75" font-family="'Liberation Sans', sans-serif">A_ctl_CTV_3</text><text x="14.5" y="124.5" font-size="2.6" fill="#cfcfd4" opacity="0.75" font-family="'Liberation Sans', sans-serif">assignment_3_solut...</text><text x="16.0" y="130.0" font-size="2.6" fill="#cfcfd4" opacity="0.75" font-family="'Liberation Sans', sans-serif">Albert_Didkovskyi</text><text x="13.0" y="135.5" font-size="2.6" fill="#cfcfd4" opacity="0.75" font-family="'Liberation Sans', sans-serif">Albert Didkovskyi...</text><text x="14.5" y="141.0" font-size="2.6" fill="#cfcfd4" opacity="0.75" font-family="'Liberation Sans', sans-serif">assignment_3_solu...</text><text x="16.0" y="146.5" font-size="2.6" fill="#cfcfd4" opacity="0.75" font-family="'Liberation Sans', sans-serif">dataset.arr</text><text x="13.0" y="152.0" font-size="2.6" fill="#cfcfd4" opacity="0.75" font-family="'Liberation Sans', sans-serif">OUTLINE</text><text x="14.5" y="157.5" font-size="2.6" fill="#cfcfd4" opacity="0.75" font-family="'Liberation Sans', sans-serif">TIMELINE</text><rect x="11" y="87" width="44" height="4" fill="#2e2e36" opacity="0.9"/><rect x="56" y="7" width="262" height="7" fill="#18181c"/><text x="60" y="12" font-size="2.4" fill="#ccc" opacity="0.7" font-family="'Liberation Sans', sans-serif">Assignment 1 - Albert.ipynb  x    Assignment 2.ipynb  x</text><text x="58" y="21.5" font-size="2.2" fill="#999" opacity="0.6" font-family="'Liberation Sans', sans-serif">A_ctl_CTV_2 > Assignment_2 > Assignment2.ipynb > ...</text><text x="58" y="27" font-size="2.2" fill="#999" opacity="0.6" font-family="'Liberation Sans', sans-serif">+ Code  + Markdown  | Run All  | Clear All Outputs  | Outline</text><rect x="56" y="34" width="1" height="14" fill="#555" opacity="0.8"/><text x="65" y="47" font-size="9.4" fill="#ececec" font-family="'Liberation Sans', sans-serif">Assignmnet 2 (100 points)</text><text x="65" y="62.0" font-size="3.2" fill="#e8e8e8" font-weight="bold" opacity="0.85" font-family="'Liberation Sans', sans-serif">Name: Albert Didkovskyi</text><text x="65" y="67.5" font-size="3.2" fill="#e8e8e8" font-weight="bold" opacity="0.85" font-family="'Liberation Sans', sans-serif">Email: ald0004@thi.de</text><text x="65" y="73.0" font-size="3.2" fill="#e8e8e8" font-weight="bold" opacity="0.85" font-family="'Liberation Sans', sans-serif">Group: A</text><text x="65" y="78.5" font-size="3.2" fill="#e8e8e8" font-weight="bold" opacity="0.85" font-family="'Liberation Sans', sans-serif">Hours spend (optional) :</text><text x="65" y="95.5" font-size="5.9" fill="#ddd" font-family="'Liberation Sans', sans-serif">SMS Spam Detection <tspan font-style="italic">(100 points)</tspan></text><text x="65" y="108.0" font-size="3.1" font-family="'Liberation Sans', sans-serif" fill="#cccccc" opacity="0.9">an it project describe a to Zipf is detection provided a SMS with and in frequency words to are in law frequency a corpus you as discussion discussion provided a corpus provided project a as</text><text x="65" y="113.5" font-size="3.1" font-family="'Liberation Sans', sans-serif" fill="#cccccc" opacity="0.9">it Zipf you corpus by law on is provided corpus discussion your detection is law to corpus a findings with python Zipf frequency an model provided model detection by are on are in corpus by </text><text x="65" y="119.0" font-size="3.1" font-family="'Liberation Sans', sans-serif" fill="#cccccc" opacity="0.9">document to you SMS words for dataset it python words and to law corpus an dataset spam document python provided model to in be using to a by describe corpus text at classifier spam of model</text><text x="65" y="124.5" font-size="3.1" font-family="'Liberation Sans', sans-serif" fill="#cccccc" opacity="0.9">python a with at that are project project python in for text project law be t</text><text x="65" y="134.0" font-size="3.1" font-family="'Liberation Sans', sans-serif" fill="#cccccc" opacity="0.9">corpus an that SMS findings describe a model law project project project project is using discussion project a your to with text for you dataset document a is the corpus it Zipf is detection</text><text x="65" y="139.5" font-size="3.1" font-family="'Liberation Sans', sans-serif" fill="#cccccc" opacity="0.9">it discussion this spam document detection using you you python model using using by in it is dataset this using for collection of with collection detection it Zipf of collection by describe</text><text x="65" y="145.0" font-size="3.1" font-family="'Liberation Sans', sans-serif" fill="#cccccc" opacity="0.9">Zipf SMS dataset discussion as findings your are project as your collection python spam o</text><text x="65" y="155.0" font-size="3.1" font-family="'Liberation Sans', sans-serif" fill="#cccccc" opacity="0.9">describe in you classifier your using on frequency discussion dataset in project model project in for for that of it provided model describe it findings document using spam it law law that o</text><text x="65" y="160.5" font-size="3.1" font-family="'Liberation Sans', sans-serif" fill="#cccccc" opacity="0.9">with of this with at SMS are provided an this Zipf words that a spam mo</text><rect x="0" y="165" width="318" height="4" fill="#18181c"/><rect x="0" y="165" width="8" height="4" fill="#3a7bd5"/><rect x="0" y="169" width="318" height="10.3" fill="#050505"/></svg></div>
<div class="t1" style="left:285px;top:930.5px">Albert Didkovskyi-CAI NatLPr-A2</div>
<div class="t2" style="left:285px;top:953.5px">CAI_NatLPr-Assignment_2 - Sommer 2025</div>
<svg class="abs" style="left:284.5px;top:979.0px" width="13" height="10"><path d="M.5 9 L6.5 3.8 L10 3.8 L4 9z" fill="#62a052"/><path d="M4 9 L10 3.8" stroke="#c8f5b8" stroke-width=".7"/><path d="M7 9 L11.5 5.5 L11.5 9z" fill="#6f786f"/><rect x="8" y="0.3" width="3.8" height="1.2" fill="#9ca0aa"/></svg>
<div class="abs" style="left:288px;top:989.0px;width:31px;height:16px;overflow:hidden"><div class="av" style="left:-4.06px;top:2.1px">avatar</div></div>
<div class="t3" style="left:325.5px;top:985.5px">Gokul Srinivasagan</div>
<div style="position:absolute;left:618px;top:730px"><svg class="th" width="318" height="179.3" style="background:#1e1e22"><rect x="0" y="0" width="318" height="3" fill="#000"/><rect x="0" y="3" width="318" height="7" fill="#1a1a1e"/><text x="10" y="8" font-size="2.4" fill="#aaa" opacity="0.6" font-family="'Liberation Sans', sans-serif">File</text><text x="20.4" y="8" font-size="2.4" fill="#aaa" opacity="0.6" font-family="'Liberation Sans', sans-serif">Edit</text><text x="30.799999999999997" y="8" font-size="2.4" fill="#aaa" opacity="0.6" font-family="'Liberation Sans', sans-serif">Selection</text><text x="49.199999999999996" y="8" font-size="2.4" fill="#aaa" opacity="0.6" font-family="'Liberation Sans', sans-serif">View</text><text x="59.599999999999994" y="8" font-size="2.4" fill="#aaa" opacity="0.6" font-family="'Liberation Sans', sans-serif">Go</text><text x="66.8" y="8" font-size="2.4" fill="#aaa" opacity="0.6" font-family="'Liberation Sans', sans-serif">Run</text><rect x="150" y="4.5" width="90" height="4" fill="#232327" rx="1"/><rect x="0" y="10" width="9" height="160" fill="#19191d"/><rect x="2.5" y="14" width="4" height="4" fill="#666" opacity="0.6" rx="0.6"/><rect x="2.5" y="23" width="4" height="4" fill="#666" opacity="0.6" rx="0.6"/><rect x="2.5" y="32" width="4" height="4" fill="#666" opacity="0.6" rx="0.6"/><rect x="2.5" y="41" width="4" height="4" fill="#666" opacity="0.6" rx="0.6"/><rect x="2.5" y="50" width="4" height="4" fill="#666" opacity="0.6" rx="0.6"/><rect x="2.5" y="59" width="4" height="4" fill="#666" opacity="0.6" rx="0.6"/><rect x="2.5" y="68" width="4" height="4" fill="#666" opacity="0.6" rx="0.6"/><text x="14" y="15" font-size="2.4" fill="#ccc" opacity="0.7" font-family="'Liberation Sans', sans-serif">Assignment2.ipynb  x</text><text x="14" y="20" font-size="2.2" fill="#999" opacity="0.5" font-family="'Liberation Sans', sans-serif">> Assignment2.ipynb > ...</text><text x="12" y="25.5" font-size="2.4" fill="#aaa" opacity="0.6" font-family="'Liberation Sans', sans-serif">+ Code  + Markdown  | Run All  | Clear All Outputs  | Variables  | Outline</text><rect x="10" y="43" width="1" height="44" fill="#2a6ab0" opacity="0.8"/><text x="18" y="37" font-size="4.4" fill="#e0e0e0" font-family="'Liberation Sans', sans-serif">SMS Spam Detection (100 points)</text><text x="18" y="49.0" font-size="2.8" font-family="'Liberation Sans', sans-serif" fill="#cccccc" opacity="0.85">as detection classifier that your and in that are SMS with project describe of model python model classifier python corpus your project in python as of be collection words using classifier you this is to classifier findings classi</text><text x="18" y="53.4" font-size="2.8" font-family="'Liberation Sans', sans-serif" fill="#cccccc" opacity="0.85">dataset are in python describe collection with provided it document to Zipf and python your it provided model provided text at law spam frequency that for document is Zipf an spam describe python SMS findings your by it spam colle</text><text x="18" y="57.8" font-size="2.8" font-family="'Liberation Sans', sans-serif" fill="#cccccc" opacity="0.85">at SMS to SMS Zipf as spam are the at dataset as be and frequency this classifier by words on proje</text><text x="18" y="65.0" font-size="2.8" font-family="'Liberation Sans', sans-serif" fill="#cccccc" opacity="0.85">in provided to at is and in is collection collection detection it SMS python it document to your of that dataset classifier corpus you by spam an detection the describe python with a findings and provided on on dataset frequency</text><text x="18" y="69.4" font-size="2.8" font-family="'Liberation Sans', sans-serif" fill="#cccccc" opacity="0.85">text you in your document as python using it classifier y</text><text x="18" y="77.5" font-size="2.8" font-family="'Liberation Sans', sans-serif" fill="#cccccc" opacity="0.85">document SMS corpus your SMS as an collection classifier collection describe your the at findings at in an project as discussion at in law words detection an collection by discussion spam at describe is your python detection classifier prov</text><text x="18" y="85.0" font-size="2.8" font-family="'Liberation Sans', sans-serif" fill="#cccccc" opacity="0.85">with at project findings classifier collection spam document provided detection frequency your python collection SMS in be for to python be words you findings be at be SMS be be di</text><text x="18" y="97" font-size="2.8" fill="#eee" font-weight="bold" opacity="0.8" font-family="'Liberation Sans', sans-serif">Dataset and Resources</text><text x="24" y="105" font-size="2.6" fill="#ccc" opacity="0.7" font-family="'Liberation Sans', sans-serif">• SMS Spam Collection Dataset</text><text x="71" y="105" font-size="2.6" fill="#4a8bd5" opacity="0.8" font-family="'Liberation Sans', sans-serif">archive.ics.uci.edu/dataset/228/sms+spam+collection</text><rect x="18" y="109" width="300" height="60" fill="#1b1b1f"/><text x="35.1" y="117.0" font-size="2.8" font-family="'Liberation Mono', monospace" opacity="0.75"><tspan fill="#4ec9b0">matplotlib.pyplot </tspan><tspan fill="#d4d4d4">count </tspan><tspan fill="#c586c0">Counter </tspan><tspan fill="#c586c0">data </tspan><tspan fill="#dcdcaa">encoding </tspan></text><text x="25.0" y="120.8" font-size="2.8" font-family="'Liberation Mono', monospace" opacity="0.75"><tspan fill="#dcdcaa">lower </tspan></text><text x="25.0" y="124.6" font-size="2.8" font-family="'Liberation Mono', monospace" opacity="0.75"><tspan fill="#d4d4d4">title </tspan></text><text x="28.4" y="128.4" font-size="2.8" font-family="'Liberation Mono', monospace" opacity="0.75"><tspan fill="#c586c0">sorted </tspan><tspan fill="#dcdcaa">predict </tspan><tspan fill="#c586c0">value </tspan><tspan fill="#c586c0">as </tspan><tspan fill="#4ec9b0">accuracy </tspan></text><text x="25.0" y="132.2" font-size="2.8" font-family="'Liberation Mono', monospace" opacity="0.75"><tspan fill="#c586c0">, </tspan><tspan fill="#9cdcfe">list </tspan></text><text x="28.4" y="136.0" font-size="2.8" font-family="'Liberation Mono', monospace" opacity="0.75"><tspan fill="#c586c0">0 </tspan><tspan fill="#c586c0">transform </tspan><tspan fill="#d4d4d4">np </tspan></text><text x="25.0" y="143.6" font-size="2.8" font-family="'Liberation Mono', monospace" opacity="0.75"><tspan fill="#c586c0">words </tspan><tspan fill="#dcdcaa">list </tspan><tspan fill="#c586c0">freq </tspan><tspan fill="#4ec9b0">fit </tspan></text><text x="25.0" y="147.4" font-size="2.8" font-family="'Liberation Mono', monospace" opacity="0.75"><tspan fill="#c586c0">( </tspan></text><text x="25.0" y="151.2" font-size="2.8" font-family="'Liberation Mono', monospace" opacity="0.75"><tspan fill="#dcdcaa">label </tspan><tspan fill="#9cdcfe">None </tspan></text><text x="31.7" y="155.0" font-size="2.8" font-family="'Liberation Mono', monospace" opacity="0.75"><tspan fill="#dcdcaa">as </tspan></text><text x="25.0" y="158.8" font-size="2.8" font-family="'Liberation Mono', monospace" opacity="0.75"><tspan fill="#9cdcfe">range </tspan><tspan fill="#d4d4d4">file </tspan></text><rect x="0" y="170" width="318" height="4.5" fill="#1f6fc0"/><rect x="0" y="174.5" width="318" height="4.8" fill="#000"/></svg></div>
<div class="t1" style="left:621px;top:930.5px">Alexander Prader-CAI NatLPr-A2</div>
<div class="t2" style="left:621px;top:953.5px">CAI_NatLPr-Assignment_2 - Sommer 2025</div>
<svg class="abs" style="left:620.5px;top:979.0px" width="13" height="10"><path d="M.5 9 L6.5 3.8 L10 3.8 L4 9z" fill="#62a052"/><path d="M4 9 L10 3.8" stroke="#c8f5b8" stroke-width=".7"/><path d="M7 9 L11.5 5.5 L11.5 9z" fill="#6f786f"/><rect x="8" y="0.3" width="3.8" height="1.2" fill="#9ca0aa"/></svg>
<div class="abs" style="left:624px;top:989.0px;width:31px;height:16px;overflow:hidden"><div class="av" style="left:-4.06px;top:2.1px">avatar</div></div>
<div class="t3" style="left:661.5px;top:985.5px">Gokul Srinivasagan</div>
<div style="position:absolute;left:954px;top:730px"><svg class="th" width="318" height="179.3" style="background:#1e1e1e"><rect x="0" y="0" width="318" height="12" fill="#000"/><text x="4" y="19.5" font-size="4.4" fill="#e0e0e0" font-family="'Liberation Sans', sans-serif">Assignmnet 2 (100 points)</text><text x="4" y="26.0" font-size="2.1" fill="#ddd" font-weight="bold" opacity="0.8" font-family="'Liberation Sans', sans-serif">Name: Ariana Gallapeni</text><text x="4" y="28.8" font-size="2.1" fill="#ddd" font-weight="bold" opacity="0.8" font-family="'Liberation Sans', sans-serif">Email: arg0011@thi.de</text><text x="4" y="31.6" font-size="2.1" fill="#ddd" font-weight="bold" opacity="0.8" font-family="'Liberation Sans', sans-serif">Group: 3</text><text x="4" y="34.4" font-size="2.1" fill="#ddd" font-weight="bold" opacity="0.8" font-family="'Liberation Sans', sans-serif">Hours spend (optional)</text><text x="4" y="42" font-size="2.6" fill="#ddd" opacity="0.8" font-family="'Liberation Sans', sans-serif">SMS Spam Detection (100 points)</text><text x="4" y="49.0" font-size="2.4" font-family="'Liberation Sans', sans-serif" fill="#cccccc" opacity="0.8">model findings detection be that on the dataset SMS model document in dataset law findings and classifier for text frequency for for are a you that SMS provided to classifier is at with as words in be with project be</text><text x="4" y="51.9" font-size="2.4" font-family="'Liberation Sans', sans-serif" fill="#cccccc" opacity="0.8">dataset and your the words a classifier python that of are frequency you document the you provided your your dataset the in that Zipf of </text><text x="4" y="56.5" font-size="2.4" font-family="'Liberation Sans', sans-serif" fill="#cccccc" opacity="0.8">and a be law document it be corpus and you project are for findings SMS and detection collection provided corpus in spam you provided detection text with project your corpus of classifier document dataset the frequency you with as text</text><text x="4" y="59.4" font-size="2.4" font-family="'Liberation Sans', sans-serif" fill="#cccccc" opacity="0.8">be an in by discussion at is collection a of classifier law freque</text><text x="4" y="64.0" font-size="2.4" font-family="'Liberation Sans', sans-serif" fill="#cccccc" opacity="0.8">a text with classifier at findings the spam at it using law be that in law at you to words text it law classifier provided for be document document python spam is a be collection that on discussion in</text><text x="4" y="69.0" font-size="2.4" font-family="'Liberation Sans', sans-serif" fill="#cccccc" opacity="0.8">as the your on using model provided law Zipf classifier in on law using provided this Zipf to describe of provided provided frequency Zipf by collecti</text><text x="4" y="75.5" font-size="2" fill="#eee" font-weight="bold" opacity="0.7" font-family="'Liberation Sans', sans-serif">Dataset and Resources</text><text x="9" y="80.5" font-size="2" fill="#9bc" opacity="0.6" font-family="'Liberation Sans', sans-serif">• SMS Spam Collection Dataset archive.ics.uci.edu/dataset/228</text><rect x="0" y="84" width="318" height="19" fill="#191919"/><text x="14.3" y="89.0" font-size="2.2" font-family="'Liberation Mono', monospace" opacity="0.9"><tspan fill="#c586c0">return </tspan><tspan fill="#9cdcfe">None </tspan><tspan fill="#6a9955">dict </tspan><tspan fill="#9cdcfe">[] </tspan><tspan fill="#6a9955">None </tspan><tspan fill="#c586c0">, </tspan></text><text x="16.9" y="95.9" font-size="2.2" font-family="'Liberation Mono', monospace" opacity="0.9"><tspan fill="#c586c0">lower </tspan></text><rect x="0" y="106" width="318" height="49" fill="#1a1a1a"/><text x="8.0" y="110.0" font-size="2.3" font-family="'Liberation Mono', monospace" opacity="0.9"><tspan fill="#c8c8c8">predict </tspan></text><text x="16.3" y="112.5" font-size="2.3" font-family="'Liberation Mono', monospace" opacity="0.9"><tspan fill="#6a9955">return </tspan><tspan fill="#c586c0">open </tspan><tspan fill="#ce9178">as </tspan><tspan fill="#ce9178">from </tspan><tspan fill="#6a9955">plot </tspan></text><text x="13.5" y="115.0" font-size="2.3" font-family="'Liberation Mono', monospace" opacity="0.9"><tspan fill="#9cdcfe">count </tspan><tspan fill="#ce9178">dict </tspan><tspan fill="#6a9955">sorted </tspan><tspan fill="#9cdcfe">list </tspan></text><text x="8.0" y="125.0" font-size="2.3" font-family="'Liberation Mono', monospace" opacity="0.9"><tspan fill="#c8c8c8">return </tspan><tspan fill="#6a9955">0 </tspan><tspan fill="#9cdcfe">matplotlib.pyplot </tspan></text><text x="8.0" y="127.5" font-size="2.3" font-family="'Liberation Mono', monospace" opacity="0.9"><tspan fill="#c8c8c8">self </tspan><tspan fill="#dcdcaa">split </tspan></text><text x="16.3" y="132.5" font-size="2.3" font-family="'Liberation Mono', monospace" opacity="0.9"><tspan fill="#c8c8c8">0 </tspan></text><text x="8.0" y="135.0" font-size="2.3" font-family="'Liberation Mono', monospace" opacity="0.9"><tspan fill="#6a9955">value </tspan><tspan fill="#dcdcaa">list </tspan><tspan fill="#c586c0">else </tspan></text><text x="8.0" y="137.5" font-size="2.3" font-family="'Liberation Mono', monospace" opacity="0.9"><tspan fill="#c8c8c8">read </tspan><tspan fill="#ce9178">sub </tspan><tspan fill="#c8c8c8">word </tspan></text><text x="8.0" y="140.0" font-size="2.3" font-family="'Liberation Mono', monospace" opacity="0.9"><tspan fill="#ce9178">figure </tspan></text><text x="16.3" y="142.5" font-size="2.3" font-family="'Liberation Mono', monospace" opacity="0.9"><tspan fill="#6a9955">) </tspan><tspan fill="#ce9178">sub </tspan><tspan fill="#6a9955">append </tspan></text><text x="13.5" y="147.5" font-size="2.3" font-family="'Liberation Mono', monospace" opacity="0.9"><tspan fill="#dcdcaa">title </tspan><tspan fill="#6a9955">Counter </tspan><tspan fill="#9cdcfe">vectorizer </tspan><tspan fill="#6a9955">else </tspan><tspan fill="#ce9178">text </tspan></text><text x="15.2" y="152.0" font-size="2" font-family="'Liberation Mono', monospace" opacity="0.6"><tspan fill="#9cdcfe">range </tspan></text><text x="8.0" y="154.5" font-size="2" font-family="'Liberation Mono', monospace" opacity="0.6"><tspan fill="#ce9178">plot </tspan></text><rect x="0" y="163" width="318" height="3" fill="#171717"/><rect x="0" y="166" width="318" height="13.3" fill="#000"/></svg></div>
<div class="t1" style="left:957px;top:930.5px">Ariana Gallapeni-CAI NatLPr-A2</div>
<div class="t2" style="left:957px;top:953.5px">CAI_NatLPr-Assignment_2 - Sommer 2025</div>
<svg class="abs" style="left:956.5px;top:979.0px" width="13" height="10"><path d="M.5 9 L6.5 3.8 L10 3.8 L4 9z" fill="#62a052"/><path d="M4 9 L10 3.8" stroke="#c8f5b8" stroke-width=".7"/><path d="M7 9 L11.5 5.5 L11.5 9z" fill="#6f786f"/><rect x="8" y="0.3" width="3.8" height="1.2" fill="#9ca0aa"/></svg>
<div class="abs" style="left:960px;top:989.0px;width:31px;height:16px;overflow:hidden"><div class="av" style="left:-4.06px;top:2.1px">avatar</div></div>
<div class="t3" style="left:997.5px;top:985.5px">Gokul Srinivasagan</div>
<div style="position:absolute;left:1290px;top:730px"><svg class="th" width="318" height="179.3" style="background:#1e1e1e"><rect x="0" y="0" width="318" height="7" fill="#1a1a1a"/><text x="8" y="5" font-size="2.6" fill="#b0b0b0" opacity="0.8" font-family="'Liberation Sans', sans-serif">File</text><text x="18.4" y="5" font-size="2.6" fill="#b0b0b0" opacity="0.8" font-family="'Liberation Sans', sans-serif">Edit</text><text x="28.799999999999997" y="5" font-size="2.6" fill="#b0b0b0" opacity="0.8" font-family="'Liberation Sans', sans-serif">Selection</text><text x="47.199999999999996" y="5" font-size="2.6" fill="#b0b0b0" opacity="0.8" font-family="'Liberation Sans', sans-serif">View</text><text x="57.599999999999994" y="5" font-size="2.6" fill="#b0b0b0" opacity="0.8" font-family="'Liberation Sans', sans-serif">Go</text><text x="64.8" y="5" font-size="2.6" fill="#b0b0b0" opacity="0.8" font-family="'Liberation Sans', sans-serif">Run</text><text x="73.6" y="5" font-size="2.6" fill="#b0b0b0" opacity="0.8" font-family="'Liberation Sans', sans-serif">Terminal</text><text x="90.39999999999999" y="5" font-size="2.6" fill="#b0b0b0" opacity="0.8" font-family="'Liberation Sans', sans-serif">Help</text><rect x="120" y="1.5" width="90" height="4" fill="#2b2b2b" rx="1"/><rect x="0" y="7" width="8" height="172.3" fill="#191919"/><rect x="2.5" y="12" width="4" height="4" fill="#6a6a6a" opacity="0.7" rx="0.6"/><rect x="2.5" y="21" width="4" height="4" fill="#6a6a6a" opacity="0.7" rx="0.6"/><rect x="2.5" y="30" width="4" height="4" fill="#6a6a6a" opacity="0.7" rx="0.6"/><rect x="2.5" y="39" width="4" height="4" fill="#6a6a6a" opacity="0.7" rx="0.6"/><rect x="2.5" y="48" width="4" height="4" fill="#6a6a6a" opacity="0.7" rx="0.6"/><rect x="2.5" y="57" width="4" height="4" fill="#6a6a6a" opacity="0.7" rx="0.6"/><text x="12" y="12" font-size="2.4" fill="#ddd" opacity="0.6" font-family="'Liberation Sans', sans-serif">main.ipynb  x   Assignment2.ipynb  x</text><text x="35" y="12" font-size="2.4" fill="#e06070" opacity="0.8" font-family="'Liberation Sans', sans-serif">Assignment2.ipynb</text><text x="12" y="17" font-size="2" fill="#999" opacity="0.5" font-family="'Liberation Sans', sans-serif">C: > Users > ... > Assignment2.ipynb > M Assignmnet 2 (100 points) > M SMS Spam Detection</text><text x="12" y="21" font-size="2" fill="#999" opacity="0.5" font-family="'Liberation Sans', sans-serif">+ Code  + Markdown  Run All  Clear All Outputs  Outline</text><text x="15" y="33.5" font-size="6" fill="#e6e6e6" font-family="'Liberation Sans', sans-serif">Assignmnet 2 (100 points)</text><text x="15" y="44.0" font-size="2.4" fill="#ddd" font-weight="bold" opacity="0.85" font-family="'Liberation Sans', sans-serif">Name:</text><text x="15" y="47.6" font-size="2.4" fill="#ddd" font-weight="bold" opacity="0.85" font-family="'Liberation Sans', sans-serif">Email:</text><text x="15" y="51.2" font-size="2.4" fill="#ddd" font-weight="bold" opacity="0.85" font-family="'Liberation Sans', sans-serif">Group: 1/2</text><text x="15" y="54.8" font-size="2.4" fill="#ddd" font-weight="bold" opacity="0.85" font-family="'Liberation Sans', sans-serif">Hours spend (optional) :</text><text x="15" y="65.5" font-size="3.2" fill="#ddd" opacity="0.8" font-family="'Liberation Sans', sans-serif">SMS Spam Detection (100 points)</text><text x="15" y="75.0" font-size="2.6" font-family="'Liberation Sans', sans-serif" fill="#cccccc" opacity="0.8">corpus and frequency using corpus the with model python be describe for and collection python an to are detection and words that document spam classifier words at this model on by detection that model are text findings classifier and provided</text><text x="15" y="78.4" font-size="2.6" font-family="'Liberation Sans', sans-serif" fill="#cccccc" opacity="0.8">the are that your by Zipf detection are an law text frequency using to describe prov</text><text x="15" y="85.0" font-size="2.6" font-family="'Liberation Sans', sans-serif" fill="#cccccc" opacity="0.8">spam frequency words text are be it findings collection on you be model by for describe on on using spam an frequency as the Zipf and dataset an are in this text project provided for classifier python are collection be</text><text x="15" y="88.4" font-size="2.6" font-family="'Liberation Sans', sans-serif" fill="#cccccc" opacity="0.8">collection using document python to for python model project that words Zipf provided spam Zipf classif</text><text x="15" y="95.0" font-size="2.6" font-family="'Liberation Sans', sans-serif" fill="#cccccc" opacity="0.8">this model frequency dataset describe collection collection it are an findings and your describe provided corpus discussion using of you at frequency are at in and document law is at for using it detection document project your spam on in</text><text x="15" y="101.5" font-size="2.6" font-family="'Liberation Sans', sans-serif" fill="#cccccc" opacity="0.8">provided your frequency with is by model collection frequency text law with be document detection you discussion discussion the with frequency findings words classifier describe your to freq</text><text x="15" y="111" font-size="2.3" fill="#eee" font-weight="bold" opacity="0.75" font-family="'Liberation Sans', sans-serif">Dataset and Resources</text><text x="20" y="117.5" font-size="2.3" fill="#8ab" opacity="0.6" font-family="'Liberation Sans', sans-serif">• SMS Spam Collection Dataset archive.ics.uci.edu/dataset/228/sms</text><rect x="9" y="123" width="1" height="48" fill="#2a6ab0" opacity="0.7"/><rect x="10" y="124" width="308" height="47" fill="#1c1c1c"/><text x="29.3" y="129.0" font-size="2.3" font-family="'Liberation Mono', monospace" opacity="0.7"><tspan fill="#ce9178">figure </tspan><tspan fill="#9cdcfe">transform </tspan><tspan fill="#9cdcfe">show </tspan><tspan fill="#ce9178">show </tspan><tspan fill="#d4d4d4">show </tspan></text><text x="23.8" y="135.2" font-size="2.3" font-family="'Liberation Mono', monospace" opacity="0.7"><tspan fill="#ce9178">data </tspan><tspan fill="#d4d4d4">path </tspan><tspan fill="#d4d4d4">with </tspan><tspan fill="#d4d4d4">items </tspan><tspan fill="#c586c0">: </tspan><tspan fill="#9cdcfe">label </tspan><tspan fill="#c586c0">re </tspan><tspan fill="#d4d4d4">matplotlib.pyplot </tspan><tspan fill="#9cdcfe">read </tspan><tspan fill="#4ec9b0">data </tspan><tspan fill="#9cdcfe">words </tspan><tspan fill="#d4d4d4">if </tspan><tspan fill="#4ec9b0">) </tspan></text><text x="26.5" y="138.3" font-size="2.3" font-family="'Liberation Mono', monospace" opacity="0.7"><tspan fill="#d4d4d4">[] </tspan><tspan fill="#ce9178">: </tspan><tspan fill="#c586c0">re </tspan><tspan fill="#4ec9b0">fit </tspan></text><text x="29.3" y="141.4" font-size="2.3" font-family="'Liberation Mono', monospace" opacity="0.7"><tspan fill="#d4d4d4">) </tspan><tspan fill="#9cdcfe">if </tspan><tspan fill="#d4d4d4">if </tspan><tspan fill="#c586c0">) </tspan></text><text x="26.5" y="144.5" font-size="2.3" font-family="'Liberation Mono', monospace" opacity="0.7"><tspan fill="#d4d4d4">data </tspan><tspan fill="#4ec9b0">len </tspan><tspan fill="#d4d4d4">transform </tspan><tspan fill="#4ec9b0">return </tspan><tspan fill="#d4d4d4">i </tspan><tspan fill="#9cdcfe">text </tspan></text><text x="29.3" y="147.6" font-size="2.3" font-family="'Liberation Mono', monospace" opacity="0.7"><tspan fill="#c586c0">lambda </tspan><tspan fill="#ce9178">ylabel </tspan><tspan fill="#d4d4d4">plot </tspan><tspan fill="#ce9178">file </tspan><tspan fill="#9cdcfe">encoding </tspan><tspan fill="#9cdcfe">( </tspan></text><text x="26.5" y="153.0" font-size="2.3" font-family="'Liberation Mono', monospace" opacity="0.7"><tspan fill="#c586c0">utf-8 </tspan><tspan fill="#d4d4d4">plt </tspan><tspan fill="#c586c0">read </tspan><tspan fill="#d4d4d4">lower </tspan></text><text x="23.8" y="156.1" font-size="2.3" font-family="'Liberation Mono', monospace" opacity="0.7"><tspan fill="#ce9178">if </tspan><tspan fill="#d4d4d4">if </tspan><tspan fill="#c586c0">items </tspan><tspan fill="#c586c0">if </tspan><tspan fill="#d4d4d4">file </tspan><tspan fill="#c586c0">) </tspan><tspan fill="#ce9178">read </tspan><tspan fill="#ce9178">in </tspan><tspan fill="#ce9178">, </tspan></text><text x="21.0" y="159.2" font-size="2.3" font-family="'Liberation Mono', monospace" opacity="0.7"><tspan fill="#c586c0">log </tspan><tspan fill="#c586c0">data </tspan><tspan fill="#ce9178">xlabel </tspan><tspan fill="#ce9178">for </tspan><tspan fill="#c586c0">file </tspan><tspan fill="#d4d4d4">path </tspan></text><rect x="0" y="173" width="318" height="4" fill="#181818"/><rect x="0" y="173" width="6" height="4" fill="#2a6ab0"/></svg></div>
<div class="t1" style="left:1293px;top:930.5px">Felix Boyke-CAI NatLPr-A2</div>
<div class="t2" style="left:1293px;top:953.5px">CAI_NatLPr-Assignment_2 - Sommer 2025</div>
<svg class="abs" style="left:1292.5px;top:979.0px" width="13" height="10"><path d="M.5 9 L6.5 3.8 L10 3.8 L4 9z" fill="#62a052"/><path d="M4 9 L10 3.8" stroke="#c8f5b8" stroke-width=".7"/><path d="M7 9 L11.5 5.5 L11.5 9z" fill="#6f786f"/><rect x="8" y="0.3" width="3.8" height="1.2" fill="#9ca0aa"/></svg>
<div class="abs" style="left:1296px;top:989.0px;width:31px;height:16px;overflow:hidden"><div class="av" style="left:-4.06px;top:2.1px">avatar</div></div>
<div class="t3" style="left:1333.5px;top:985.5px">Gokul Srinivasagan</div>
<div style="position:absolute;left:282px;top:1017.6px"><svg class="th" width="318" height="179.3" style="background:#1c1c1c"><rect x="0" y="0" width="318" height="2" fill="#000"/><rect x="0" y="2" width="318" height="6" fill="#161616"/><text x="5" y="6.5" font-size="2.4" fill="#bbb" opacity="0.6" font-family="'Liberation Sans', sans-serif">Assignment2.ipynb    Assignment2.ipynb  x   Assignment2 data</text><text x="5" y="11.5" font-size="2" fill="#999" opacity="0.5" font-family="'Liberation Sans', sans-serif">C: > Users > ... > Assignment_2 > Assignment2.ipynb > M Assignmnet 2 (100 points)</text><text x="5" y="15.5" font-size="2" fill="#999" opacity="0.5" font-family="'Liberation Sans', sans-serif">+ Code  + Markdown  Run All  Restart  Clear All Outputs  Outline</text><text x="7" y="28" font-size="6.2" fill="#e0e0e0" font-family="'Liberation Sans', sans-serif">Assignmnet 2 (100 points)</text></svg></div>
<div style="position:absolute;left:618px;top:1017.6px"><svg class="th" width="318" height="179.3" style="background:#1c1c1c"><rect x="0" y="0" width="318" height="2" fill="#000"/><rect x="0" y="2" width="318" height="7" fill="#1a1a1a"/><text x="8" y="7" font-size="2.6" fill="#b0b0b0" opacity="0.8" font-family="'Liberation Sans', sans-serif">File</text><text x="18.4" y="7" font-size="2.6" fill="#b0b0b0" opacity="0.8" font-family="'Liberation Sans', sans-serif">Edit</text><text x="28.799999999999997" y="7" font-size="2.6" fill="#b0b0b0" opacity="0.8" font-family="'Liberation Sans', sans-serif">Selection</text><text x="47.199999999999996" y="7" font-size="2.6" fill="#b0b0b0" opacity="0.8" font-family="'Liberation Sans', sans-serif">View</text><text x="57.599999999999994" y="7" font-size="2.6" fill="#b0b0b0" opacity="0.8" font-family="'Liberation Sans', sans-serif">Go</text><text x="64.8" y="7" font-size="2.6" fill="#b0b0b0" opacity="0.8" font-family="'Liberation Sans', sans-serif">Run</text><text x="73.6" y="7" font-size="2.6" fill="#b0b0b0" opacity="0.8" font-family="'Liberation Sans', sans-serif">Terminal</text><text x="90.39999999999999" y="7" font-size="2.6" fill="#b0b0b0" opacity="0.8" font-family="'Liberation Sans', sans-serif">Help</text><rect x="120" y="3.5" width="90" height="4" fill="#2b2b2b" rx="1"/><rect x="0" y="9" width="7" height="170.3" fill="#181818"/><rect x="2.5" y="14" width="4" height="4" fill="#6a6a6a" opacity="0.7" rx="0.6"/><rect x="2.5" y="23" width="4" height="4" fill="#6a6a6a" opacity="0.7" rx="0.6"/><rect x="2.5" y="32" width="4" height="4" fill="#6a6a6a" opacity="0.7" rx="0.6"/><rect x="2.5" y="41" width="4" height="4" fill="#6a6a6a" opacity="0.7" rx="0.6"/><rect x="2.5" y="50" width="4" height="4" fill="#6a6a6a" opacity="0.7" rx="0.6"/><rect x="2.5" y="59" width="4" height="4" fill="#6a6a6a" opacity="0.7" rx="0.6"/><rect x="7" y="9" width="45" height="170" fill="#1e1e1e"/><text x="12" y="15" font-size="2" fill="#bbb" opacity="0.6" font-family="'Liberation Sans', sans-serif">EXPLORER</text><text x="12" y="21" font-size="2.4" fill="#ddd" opacity="0.7" font-family="'Liberation Sans', sans-serif">PRAKTIKUM CTV  + + +</text><text x="12" y="26" font-size="2.4" fill="#ccc" opacity="0.6" font-family="'Liberation Sans', sans-serif">> A_ctl_CTV_1</text><text x="55" y="14" font-size="2.4" fill="#ddd" opacity="0.6" font-family="'Liberation Sans', sans-serif">Assignment 2.ipynb   Assignment_2/Assignment_group.ipynb  x</text><text x="55" y="19" font-size="2" fill="#999" opacity="0.5" font-family="'Liberation Sans', sans-serif">Praktikum / assignment_2 / Assignment_2_Albert.ipynb</text><text x="55" y="24" font-size="2" fill="#999" opacity="0.5" font-family="'Liberation Sans', sans-serif">+ Code  + Markdown  Run All  Outline</text></svg></div>
<div class="abs" style="left:1479.5px;top:30px;width:128.5px;height:212px;background:#fff;border:1px solid #e4e4e4;border-radius:6px"></div>
<div class="dd" style="left:1507.5px;top:42.6px">API</div>
<div class="dd" style="left:1507.5px;top:66.3px">Channel</div>
<div class="dd" style="left:1507.5px;top:90.6px">Survey</div>
<div class="dd" style="left:1507.5px;top:113.7px">Announcement</div>
<div class="dd" style="left:1507.5px;top:137.3px">Upload</div>
<svg class="abs" style="left:1491.5px;top:43px" width="12" height="12"><g fill="#111"><path d="M6 .5L8.4 2.9 6 5.3 3.6 2.9z M6 6.7L8.4 9.1 6 11.5 3.6 9.1z M2.9 3.6L5.3 6 2.9 8.4 .5 6z M9.1 3.6L11.5 6 9.1 8.4 6.7 6z"/></g></svg>
<svg class="abs" style="left:1491.5px;top:65.5px" width="12" height="12" fill="none" stroke="#333" stroke-width="1"><circle cx="6" cy="6" r="5.3"/><path d="M6 3v6M3 6h6"/></svg>
<div class="abs" style="left:1495px;top:92px;font:bold 8px 'Liberation Sans', sans-serif;color:#333;line-height:1">?</div>
<svg class="abs" style="left:1491.5px;top:114px" width="13" height="12" fill="none" stroke="#333" stroke-width="1.25" stroke-linejoin="round"><path d="M1 3.8h3v3.6h-3z M4 3.8L10.5 1v9.2L4 7.4 M2.5 7.4l.9 3.4 M11.3 1v9.2"/></svg>
<svg class="abs" style="left:1491px;top:137px" width="13" height="14" fill="none" stroke="#333" stroke-width="1"><path d="M4 5.5H2v7.5h9V5.5H9 M6.5 9V1.5 M4.3 3.7L6.5 1.5 8.7 3.7"/></svg>
<div class="abs" style="left:1480px;top:155.3px;width:128px;height:23px;background:#2b48d6"></div>
<svg class="abs" style="left:1491.5px;top:161px" width="13" height="12" fill="#e8ecff"><rect x="0" y="0" width="4.5" height="4.5" rx="1"/><rect x="0" y="6" width="4.5" height="4.5" rx="1"/><rect x="6" y="1" width="6.5" height="1.3"/><rect x="6" y="3.3" width="4.5" height="1.3"/><rect x="6" y="7" width="6.5" height="1.3"/><rect x="6" y="9.3" width="4.5" height="1.3"/></svg>
<div class="dd" style="left:1506.5px;top:160.5px;color:#f4f5ff">Your Media</div>
<svg class="abs" style="left:1553px;top:165.5px" width="15" height="18" viewBox="0 0 12 15"><path d="M3.5 1.5c.8-.8 1.7 0 1.7.7v5.3c.4-.9 1.8-.8 2 .1.3-.8 1.7-.7 1.9.2.4-.6 1.6-.4 1.7.5v3.5c0 2-1.3 3-3 3H6c-1.3 0-2-.7-2.7-1.7L1.1 9.6c-.5-.8.3-1.8 1.3-1.2l1.1 1z" fill="#fff" stroke="#222" stroke-width=".9"/></svg>
<div class="abs" style="left:1487.5px;top:186.3px;width:9px;height:9px;border-radius:50%;background:#c8c8c8"></div>
<div class="dd" style="left:1513.5px;top:184.7px">Evaluation</div>
<div class="abs" style="left:1481px;top:203.5px;width:126px;height:1px;background:#ececec"></div>
<svg class="abs" style="left:1491px;top:218.5px" width="13" height="12" fill="none" stroke="#333" stroke-width="1"><path d="M8 3.5V1H1v10h7V8.5 M4.5 6h8 M10 3.5L12.5 6 10 8.5"/></svg>
<div class="dd" style="left:1507.5px;top:218.6px">Logout</div>
<div class="abs" style="left:0;top:1050px;width:1920px;height:30px;background:#2b48d6"></div>
<div class="abs" style="left:0;top:1050px;width:1920px;height:1px;background:#3a48b8"></div>
<div class="abs" style="left:0;top:1077.5px;width:1920px;height:2.5px;background:#3b3b48"></div>
<div class="ft" style="left:295px;top:1061px">How to contact us</div>
<div class="ft" style="left:388px;top:1061px">Legal notice</div>
<div class="ft" style="left:458px;top:1061px">Data protection</div>
<div class="ft" style="left:541px;top:1061px">Terms of usage</div>
<div class="abs" style="left:0;top:1060px;width:64px;height:17.5px;background:#202020"></div>
<div class="abs" style="left:-2px;top:1064px;font-size:10px;color:#e8e8e8;line-height:1;white-space:nowrap">oad/overview</div>
</body></html>
